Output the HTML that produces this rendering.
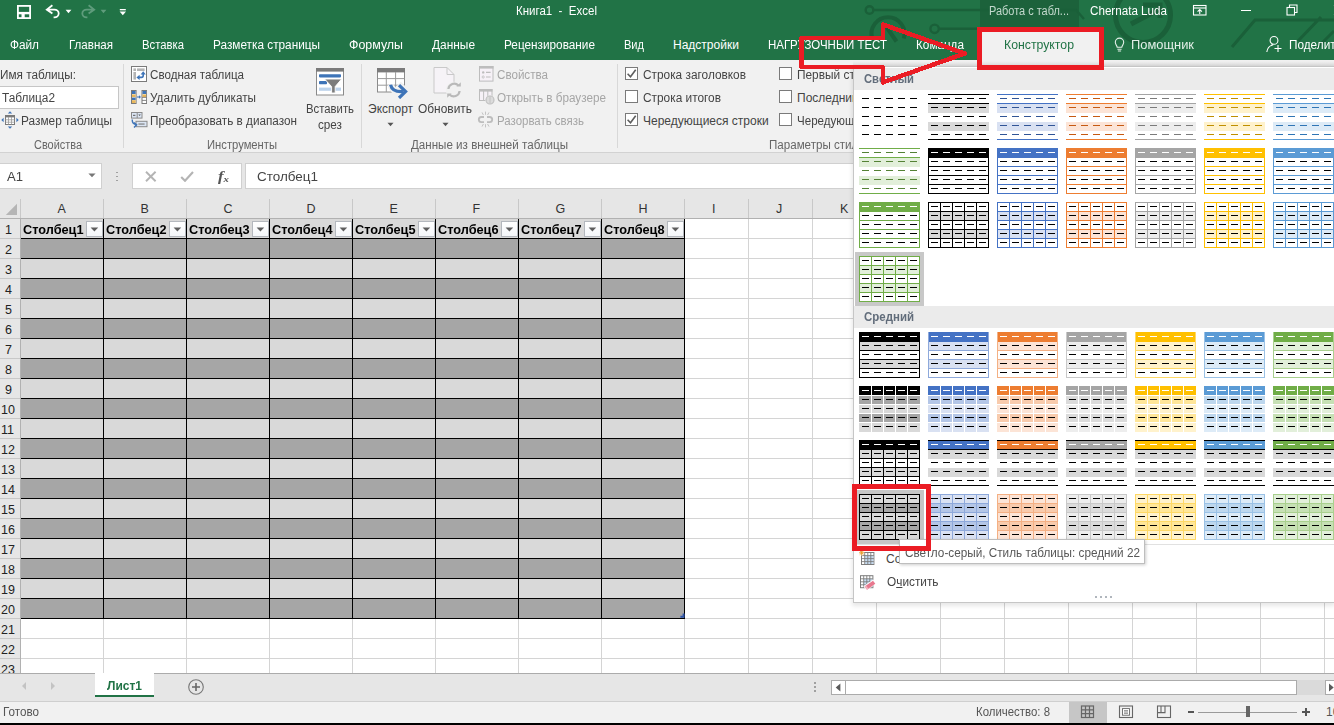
<!DOCTYPE html>
<html lang="ru"><head><meta charset="utf-8"><title>Книга1 - Excel</title>
<style>
html,body{margin:0;padding:0;}
body{width:1334px;height:725px;overflow:hidden;position:relative;background:#fff;font-family:"Liberation Sans", sans-serif;}
#root{position:absolute;left:0;top:0;width:1334px;height:725px;overflow:hidden;}
#root div,#root svg,#root span.t{position:absolute;}
span.t{white-space:nowrap;transform-origin:0 50%;}

</style></head><body><div id="root">
<div style="left:0px;top:0px;width:1334px;height:60px;background:#217346;"></div><div style="left:0px;top:60px;width:1334px;height:92px;background:#f1f1f1;"></div><div style="left:0px;top:152px;width:1334px;height:1px;background:#d2d2d2;"></div><div style="left:0px;top:153px;width:1334px;height:46px;background:#e6e6e6;"></div><div style="left:0px;top:199px;width:1334px;height:474px;background:#fff;"></div><div style="left:0px;top:673px;width:1334px;height:29px;background:#e6e6e6;"></div><div style="left:0px;top:701px;width:1334px;height:22px;background:#f1f1f1;"></div><div style="left:0px;top:723px;width:1334px;height:2px;background:#000;"></div><div style="left:980px;top:0px;width:99px;height:30px;background:#1c623b;"></div><svg style="left:840px;top:0px" width="494" height="60" viewBox="0 0 494 60" ><g fill="none" stroke="#1a6039" stroke-width="2.4"><circle cx="29.5" cy="10" r="3.8"/><path d="M33.5 10H236l8 9"/><circle cx="94.6" cy="28.8" r="4.2"/><path d="M99 28.8H140"/><path d="M32.2 38.5A16.5 16.5 0 1 1 63.8 38.5" stroke-width="4"/><path d="M46.5 27l10 14.5" stroke-width="4"/><circle cx="303" cy="15" r="27.5" stroke-width="5"/><path d="M291 24l27-14M303 5h17v13" stroke-width="5"/><path d="M392 47l23-27H494M458 41l23-24M478 47l16-16" stroke-width="3"/></g></svg><span class="t" id="t0" style="left:516px;top:3.0px;font-size:12px;line-height:16px;color:#fff;transform:scaleX(0.9589);">Книга1&nbsp; -&nbsp; Excel</span><span class="t" id="t1" style="left:989px;top:3.0px;font-size:12px;line-height:16px;color:#c3d9cd;transform:scaleX(0.9128);">Работа с табл...</span><span class="t" id="t2" style="left:1090px;top:3.0px;font-size:12px;line-height:16px;color:#fff;transform:scaleX(0.9697);">Chernata Luda</span><span class="t" id="t3" style="left:10px;top:37.0px;font-size:12px;line-height:16px;color:#fff;transform:scaleX(0.9825);">Файл</span><span class="t" id="t4" style="left:69px;top:37.0px;font-size:12px;line-height:16px;color:#fff;transform:scaleX(0.9631);">Главная</span><span class="t" id="t5" style="left:142px;top:37.0px;font-size:12px;line-height:16px;color:#fff;transform:scaleX(0.9415);">Вставка</span><span class="t" id="t6" style="left:213px;top:37.0px;font-size:12px;line-height:16px;color:#fff;transform:scaleX(0.9828);">Разметка страницы</span><span class="t" id="t7" style="left:349px;top:37.0px;font-size:12px;line-height:16px;color:#fff;transform:scaleX(1.0341);">Формулы</span><span class="t" id="t8" style="left:432px;top:37.0px;font-size:12px;line-height:16px;color:#fff;transform:scaleX(0.9917);">Данные</span><span class="t" id="t9" style="left:504px;top:37.0px;font-size:12px;line-height:16px;color:#fff;transform:scaleX(0.9820);">Рецензирование</span><span class="t" id="t10" style="left:624px;top:37.0px;font-size:12px;line-height:16px;color:#fff;transform:scaleX(0.9209);">Вид</span><span class="t" id="t11" style="left:673px;top:37.0px;font-size:12px;line-height:16px;color:#fff;">Надстройки</span><span class="t" id="t12" style="left:768px;top:37.0px;font-size:12px;line-height:16px;color:#fff;transform:scaleX(0.9547);">НАГРУЗОЧНЫЙ ТЕСТ</span><span class="t" id="t13" style="left:916px;top:37.0px;font-size:12px;line-height:16px;color:#fff;transform:scaleX(0.9818);">Команда</span><div style="left:982px;top:31px;width:118px;height:35px;background:#f1f1f1;"></div><span class="t" id="t14" style="left:1004px;top:37.0px;font-size:12px;line-height:16px;color:#217346;transform:scaleX(1.0231);">Конструктор</span><span class="t" id="t15" style="left:1131px;top:37.0px;font-size:12px;line-height:16px;color:#e3efe8;transform:scaleX(1.0735);">Помощник</span><span class="t" id="t16" style="left:1289px;top:37.0px;font-size:12px;line-height:16px;color:#fff;transform:scaleX(0.9809);">Поделиться</span><span class="t" id="t17" style="left:0px;top:67.0px;font-size:12px;line-height:16px;color:#444;transform:scaleX(0.9791);">Имя таблицы:</span><div style="left:-1px;top:86px;width:120px;height:23px;background:#fff;border:1px solid #c6c6c6;box-sizing:border-box;"></div><span class="t" id="t18" style="left:2px;top:90.4px;font-size:12px;line-height:16px;color:#444;transform:scaleX(0.9863);">Таблица2</span><span class="t" id="t19" style="left:21px;top:113.0px;font-size:12px;line-height:16px;color:#444;transform:scaleX(0.9875);">Размер таблицы</span><span class="t" id="t20" style="left:34px;top:136.5px;font-size:12px;line-height:16px;color:#666;transform:scaleX(0.9108);">Свойства</span><div style="left:123px;top:64px;width:1px;height:84px;background:#d8d8d8;"></div><span class="t" id="t21" style="left:150px;top:67.0px;font-size:12px;line-height:16px;color:#444;transform:scaleX(0.9683);">Сводная таблица</span><span class="t" id="t22" style="left:150px;top:90.0px;font-size:12px;line-height:16px;color:#444;transform:scaleX(0.9781);">Удалить дубликаты</span><span class="t" id="t23" style="left:150px;top:113.0px;font-size:12px;line-height:16px;color:#444;transform:scaleX(0.9780);">Преобразовать в диапазон</span><span class="t" id="t24" style="left:207px;top:136.5px;font-size:12px;line-height:16px;color:#666;transform:scaleX(0.9355);">Инструменты</span><span class="t" id="t25" style="left:306px;top:101.0px;font-size:12px;line-height:16px;color:#444;transform:scaleX(0.9435);">Вставить</span><span class="t" id="t26" style="left:318px;top:117.0px;font-size:12px;line-height:16px;color:#444;transform:scaleX(0.9759);">срез</span><div style="left:361px;top:64px;width:1px;height:84px;background:#d8d8d8;"></div><span class="t" id="t27" style="left:368px;top:101.0px;font-size:12px;line-height:16px;color:#444;">Экспорт</span><span class="t" id="t28" style="left:418px;top:101.0px;font-size:12px;line-height:16px;color:#444;transform:scaleX(0.9937);">Обновить</span><span class="t" id="t29" style="left:497px;top:67.0px;font-size:12px;line-height:16px;color:#a6a6a6;transform:scaleX(0.9677);">Свойства</span><span class="t" id="t30" style="left:497px;top:90.0px;font-size:12px;line-height:16px;color:#a6a6a6;transform:scaleX(0.9762);">Открыть в браузере</span><span class="t" id="t31" style="left:497px;top:113.0px;font-size:12px;line-height:16px;color:#a6a6a6;transform:scaleX(0.9551);">Разорвать связь</span><span class="t" id="t32" style="left:411px;top:136.5px;font-size:12px;line-height:16px;color:#666;transform:scaleX(0.9664);">Данные из внешней таблицы</span><div style="left:617px;top:64px;width:1px;height:84px;background:#d8d8d8;"></div><span class="t" id="t33" style="left:643px;top:67.0px;font-size:12px;line-height:16px;color:#444;transform:scaleX(0.9870);">Строка заголовков</span><span class="t" id="t34" style="left:643px;top:90.0px;font-size:12px;line-height:16px;color:#444;transform:scaleX(0.9881);">Строка итогов</span><span class="t" id="t35" style="left:643px;top:113.0px;font-size:12px;line-height:16px;color:#444;">Чередующиеся строки</span><span class="t" id="t36" style="left:797px;top:67.0px;font-size:12px;line-height:16px;color:#444;transform:scaleX(0.9883);">Первый столбец</span><span class="t" id="t37" style="left:797px;top:90.0px;font-size:12px;line-height:16px;color:#444;">Последний столбец</span><span class="t" id="t38" style="left:797px;top:113.0px;font-size:12px;line-height:16px;color:#444;transform:scaleX(0.9633);">Чередующиеся столбцы</span><span class="t" id="t39" style="left:769px;top:136.5px;font-size:12px;line-height:16px;color:#666;transform:scaleX(0.9651);">Параметры стилей таблиц</span><div style="left:625px;top:67px;width:13px;height:13px;background:#fff;border:1px solid #7a7a7a;box-sizing:border-box;"></div><div style="left:625px;top:90px;width:13px;height:13px;background:#fff;border:1px solid #7a7a7a;box-sizing:border-box;"></div><div style="left:625px;top:113px;width:13px;height:13px;background:#fff;border:1px solid #7a7a7a;box-sizing:border-box;"></div><div style="left:779px;top:67px;width:13px;height:13px;background:#fff;border:1px solid #7a7a7a;box-sizing:border-box;"></div><div style="left:779px;top:90px;width:13px;height:13px;background:#fff;border:1px solid #7a7a7a;box-sizing:border-box;"></div><div style="left:779px;top:113px;width:13px;height:13px;background:#fff;border:1px solid #7a7a7a;box-sizing:border-box;"></div><div style="left:0px;top:163px;width:102px;height:26px;background:#fff;border:1px solid #d0d0d0;border-left:none;box-sizing:border-box;"></div><span class="t" id="t40" style="left:7px;top:169.0px;font-size:12.5px;line-height:16px;color:#444;transform:scaleX(1.0460);">A1</span><div style="left:132px;top:163px;width:110px;height:26px;background:#fff;border:1px solid #d0d0d0;box-sizing:border-box;"></div><div style="left:245px;top:163px;width:1100px;height:26px;background:#fff;border:1px solid #d0d0d0;box-sizing:border-box;"></div><span class="t" id="t41" style="left:257px;top:169.2px;font-size:12.5px;line-height:16px;color:#444;transform:scaleX(1.0764);">Столбец1</span><div style="left:0px;top:199px;width:1334px;height:19px;background:#e6e6e6;"></div><div style="left:0px;top:218px;width:1334px;height:1px;background:#b1b1b1;"></div><div style="left:20px;top:199px;width:1px;height:19px;background:#c8c8c8;"></div><div style="left:103px;top:199px;width:1px;height:19px;background:#c8c8c8;"></div><div style="left:186px;top:199px;width:1px;height:19px;background:#c8c8c8;"></div><div style="left:269px;top:199px;width:1px;height:19px;background:#c8c8c8;"></div><div style="left:352px;top:199px;width:1px;height:19px;background:#c8c8c8;"></div><div style="left:435px;top:199px;width:1px;height:19px;background:#c8c8c8;"></div><div style="left:518px;top:199px;width:1px;height:19px;background:#c8c8c8;"></div><div style="left:601px;top:199px;width:1px;height:19px;background:#c8c8c8;"></div><div style="left:684px;top:199px;width:1px;height:19px;background:#c8c8c8;"></div><div style="left:748px;top:199px;width:1px;height:19px;background:#c8c8c8;"></div><div style="left:812px;top:199px;width:1px;height:19px;background:#c8c8c8;"></div><div style="left:876px;top:199px;width:1px;height:19px;background:#c8c8c8;"></div><div style="left:940px;top:199px;width:1px;height:19px;background:#c8c8c8;"></div><div style="left:1004px;top:199px;width:1px;height:19px;background:#c8c8c8;"></div><div style="left:1068px;top:199px;width:1px;height:19px;background:#c8c8c8;"></div><div style="left:1132px;top:199px;width:1px;height:19px;background:#c8c8c8;"></div><div style="left:1196px;top:199px;width:1px;height:19px;background:#c8c8c8;"></div><div style="left:1260px;top:199px;width:1px;height:19px;background:#c8c8c8;"></div><div style="left:1324px;top:199px;width:1px;height:19px;background:#c8c8c8;"></div><div style="left:1388px;top:199px;width:1px;height:19px;background:#c8c8c8;"></div><span class="t" id="t42" style="left:57.5px;top:201.0px;font-size:12.5px;line-height:16px;color:#333;">A</span><span class="t" id="t43" style="left:140.5px;top:201.0px;font-size:12.5px;line-height:16px;color:#333;">B</span><span class="t" id="t44" style="left:223.5px;top:201.0px;font-size:12.5px;line-height:16px;color:#333;">C</span><span class="t" id="t45" style="left:306.5px;top:201.0px;font-size:12.5px;line-height:16px;color:#333;">D</span><span class="t" id="t46" style="left:389.5px;top:201.0px;font-size:12.5px;line-height:16px;color:#333;">E</span><span class="t" id="t47" style="left:472.5px;top:201.0px;font-size:12.5px;line-height:16px;color:#333;">F</span><span class="t" id="t48" style="left:555.5px;top:201.0px;font-size:12.5px;line-height:16px;color:#333;">G</span><span class="t" id="t49" style="left:638.5px;top:201.0px;font-size:12.5px;line-height:16px;color:#333;">H</span><span class="t" id="t50" style="left:712.0px;top:201.0px;font-size:12.5px;line-height:16px;color:#333;">I</span><span class="t" id="t51" style="left:776.0px;top:201.0px;font-size:12.5px;line-height:16px;color:#333;">J</span><span class="t" id="t52" style="left:840.0px;top:201.0px;font-size:12.5px;line-height:16px;color:#333;">K</span><span class="t" id="t53" style="left:904.0px;top:201.0px;font-size:12.5px;line-height:16px;color:#333;">L</span><span class="t" id="t54" style="left:968.0px;top:201.0px;font-size:12.5px;line-height:16px;color:#333;">M</span><span class="t" id="t55" style="left:1032.0px;top:201.0px;font-size:12.5px;line-height:16px;color:#333;">N</span><span class="t" id="t56" style="left:1096.0px;top:201.0px;font-size:12.5px;line-height:16px;color:#333;">O</span><span class="t" id="t57" style="left:1160.0px;top:201.0px;font-size:12.5px;line-height:16px;color:#333;">P</span><span class="t" id="t58" style="left:1224.0px;top:201.0px;font-size:12.5px;line-height:16px;color:#333;">Q</span><span class="t" id="t59" style="left:1288.0px;top:201.0px;font-size:12.5px;line-height:16px;color:#333;">R</span><span class="t" id="t60" style="left:1352.0px;top:201.0px;font-size:12.5px;line-height:16px;color:#333;">S</span><div style="left:0px;top:219px;width:20px;height:454px;background:#e6e6e6;"></div><div style="left:20px;top:219px;width:1px;height:454px;background:#b1b1b1;"></div><div style="left:0px;top:238px;width:20px;height:1px;background:#c8c8c8;"></div><span class="t" id="t61" style="left:5px;top:221.6px;font-size:12.5px;line-height:16px;color:#222;">1</span><div style="left:0px;top:258px;width:20px;height:1px;background:#c8c8c8;"></div><span class="t" id="t62" style="left:5px;top:241.6px;font-size:12.5px;line-height:16px;color:#222;">2</span><div style="left:0px;top:278px;width:20px;height:1px;background:#c8c8c8;"></div><span class="t" id="t63" style="left:5px;top:261.6px;font-size:12.5px;line-height:16px;color:#222;">3</span><div style="left:0px;top:298px;width:20px;height:1px;background:#c8c8c8;"></div><span class="t" id="t64" style="left:5px;top:281.6px;font-size:12.5px;line-height:16px;color:#222;">4</span><div style="left:0px;top:318px;width:20px;height:1px;background:#c8c8c8;"></div><span class="t" id="t65" style="left:5px;top:301.6px;font-size:12.5px;line-height:16px;color:#222;">5</span><div style="left:0px;top:338px;width:20px;height:1px;background:#c8c8c8;"></div><span class="t" id="t66" style="left:5px;top:321.6px;font-size:12.5px;line-height:16px;color:#222;">6</span><div style="left:0px;top:358px;width:20px;height:1px;background:#c8c8c8;"></div><span class="t" id="t67" style="left:5px;top:341.6px;font-size:12.5px;line-height:16px;color:#222;">7</span><div style="left:0px;top:378px;width:20px;height:1px;background:#c8c8c8;"></div><span class="t" id="t68" style="left:5px;top:361.6px;font-size:12.5px;line-height:16px;color:#222;">8</span><div style="left:0px;top:398px;width:20px;height:1px;background:#c8c8c8;"></div><span class="t" id="t69" style="left:5px;top:381.6px;font-size:12.5px;line-height:16px;color:#222;">9</span><div style="left:0px;top:418px;width:20px;height:1px;background:#c8c8c8;"></div><span class="t" id="t70" style="left:1px;top:401.6px;font-size:12.5px;line-height:16px;color:#222;">10</span><div style="left:0px;top:438px;width:20px;height:1px;background:#c8c8c8;"></div><span class="t" id="t71" style="left:1px;top:421.6px;font-size:12.5px;line-height:16px;color:#222;">11</span><div style="left:0px;top:458px;width:20px;height:1px;background:#c8c8c8;"></div><span class="t" id="t72" style="left:1px;top:441.6px;font-size:12.5px;line-height:16px;color:#222;">12</span><div style="left:0px;top:478px;width:20px;height:1px;background:#c8c8c8;"></div><span class="t" id="t73" style="left:1px;top:461.6px;font-size:12.5px;line-height:16px;color:#222;">13</span><div style="left:0px;top:498px;width:20px;height:1px;background:#c8c8c8;"></div><span class="t" id="t74" style="left:1px;top:481.6px;font-size:12.5px;line-height:16px;color:#222;">14</span><div style="left:0px;top:518px;width:20px;height:1px;background:#c8c8c8;"></div><span class="t" id="t75" style="left:1px;top:501.6px;font-size:12.5px;line-height:16px;color:#222;">15</span><div style="left:0px;top:538px;width:20px;height:1px;background:#c8c8c8;"></div><span class="t" id="t76" style="left:1px;top:521.6px;font-size:12.5px;line-height:16px;color:#222;">16</span><div style="left:0px;top:558px;width:20px;height:1px;background:#c8c8c8;"></div><span class="t" id="t77" style="left:1px;top:541.6px;font-size:12.5px;line-height:16px;color:#222;">17</span><div style="left:0px;top:578px;width:20px;height:1px;background:#c8c8c8;"></div><span class="t" id="t78" style="left:1px;top:561.6px;font-size:12.5px;line-height:16px;color:#222;">18</span><div style="left:0px;top:598px;width:20px;height:1px;background:#c8c8c8;"></div><span class="t" id="t79" style="left:1px;top:581.6px;font-size:12.5px;line-height:16px;color:#222;">19</span><div style="left:0px;top:618px;width:20px;height:1px;background:#c8c8c8;"></div><span class="t" id="t80" style="left:1px;top:601.6px;font-size:12.5px;line-height:16px;color:#222;">20</span><div style="left:0px;top:638px;width:20px;height:1px;background:#c8c8c8;"></div><span class="t" id="t81" style="left:1px;top:621.6px;font-size:12.5px;line-height:16px;color:#222;">21</span><div style="left:0px;top:658px;width:20px;height:1px;background:#c8c8c8;"></div><span class="t" id="t82" style="left:1px;top:641.6px;font-size:12.5px;line-height:16px;color:#222;">22</span><span class="t" id="t83" style="left:1px;top:661.6px;font-size:12.5px;line-height:16px;color:#222;">23</span><div style="left:21px;top:238px;width:1334px;height:1px;background:#d4d4d4;"></div><div style="left:21px;top:258px;width:1334px;height:1px;background:#d4d4d4;"></div><div style="left:21px;top:278px;width:1334px;height:1px;background:#d4d4d4;"></div><div style="left:21px;top:298px;width:1334px;height:1px;background:#d4d4d4;"></div><div style="left:21px;top:318px;width:1334px;height:1px;background:#d4d4d4;"></div><div style="left:21px;top:338px;width:1334px;height:1px;background:#d4d4d4;"></div><div style="left:21px;top:358px;width:1334px;height:1px;background:#d4d4d4;"></div><div style="left:21px;top:378px;width:1334px;height:1px;background:#d4d4d4;"></div><div style="left:21px;top:398px;width:1334px;height:1px;background:#d4d4d4;"></div><div style="left:21px;top:418px;width:1334px;height:1px;background:#d4d4d4;"></div><div style="left:21px;top:438px;width:1334px;height:1px;background:#d4d4d4;"></div><div style="left:21px;top:458px;width:1334px;height:1px;background:#d4d4d4;"></div><div style="left:21px;top:478px;width:1334px;height:1px;background:#d4d4d4;"></div><div style="left:21px;top:498px;width:1334px;height:1px;background:#d4d4d4;"></div><div style="left:21px;top:518px;width:1334px;height:1px;background:#d4d4d4;"></div><div style="left:21px;top:538px;width:1334px;height:1px;background:#d4d4d4;"></div><div style="left:21px;top:558px;width:1334px;height:1px;background:#d4d4d4;"></div><div style="left:21px;top:578px;width:1334px;height:1px;background:#d4d4d4;"></div><div style="left:21px;top:598px;width:1334px;height:1px;background:#d4d4d4;"></div><div style="left:21px;top:618px;width:1334px;height:1px;background:#d4d4d4;"></div><div style="left:21px;top:638px;width:1334px;height:1px;background:#d4d4d4;"></div><div style="left:21px;top:658px;width:1334px;height:1px;background:#d4d4d4;"></div><div style="left:103px;top:219px;width:1px;height:454px;background:#d4d4d4;"></div><div style="left:186px;top:219px;width:1px;height:454px;background:#d4d4d4;"></div><div style="left:269px;top:219px;width:1px;height:454px;background:#d4d4d4;"></div><div style="left:352px;top:219px;width:1px;height:454px;background:#d4d4d4;"></div><div style="left:435px;top:219px;width:1px;height:454px;background:#d4d4d4;"></div><div style="left:518px;top:219px;width:1px;height:454px;background:#d4d4d4;"></div><div style="left:601px;top:219px;width:1px;height:454px;background:#d4d4d4;"></div><div style="left:684px;top:219px;width:1px;height:454px;background:#d4d4d4;"></div><div style="left:748px;top:219px;width:1px;height:454px;background:#d4d4d4;"></div><div style="left:812px;top:219px;width:1px;height:454px;background:#d4d4d4;"></div><div style="left:876px;top:219px;width:1px;height:454px;background:#d4d4d4;"></div><div style="left:940px;top:219px;width:1px;height:454px;background:#d4d4d4;"></div><div style="left:1004px;top:219px;width:1px;height:454px;background:#d4d4d4;"></div><div style="left:1068px;top:219px;width:1px;height:454px;background:#d4d4d4;"></div><div style="left:1132px;top:219px;width:1px;height:454px;background:#d4d4d4;"></div><div style="left:1196px;top:219px;width:1px;height:454px;background:#d4d4d4;"></div><div style="left:1260px;top:219px;width:1px;height:454px;background:#d4d4d4;"></div><div style="left:1324px;top:219px;width:1px;height:454px;background:#d4d4d4;"></div><div style="left:1388px;top:219px;width:1px;height:454px;background:#d4d4d4;"></div><div style="left:21px;top:219px;width:664px;height:20px;background:#d9d9d9;"></div><div style="left:21px;top:239px;width:664px;height:20px;background:#a6a6a6;"></div><div style="left:21px;top:259px;width:664px;height:20px;background:#d9d9d9;"></div><div style="left:21px;top:279px;width:664px;height:20px;background:#a6a6a6;"></div><div style="left:21px;top:299px;width:664px;height:20px;background:#d9d9d9;"></div><div style="left:21px;top:319px;width:664px;height:20px;background:#a6a6a6;"></div><div style="left:21px;top:339px;width:664px;height:20px;background:#d9d9d9;"></div><div style="left:21px;top:359px;width:664px;height:20px;background:#a6a6a6;"></div><div style="left:21px;top:379px;width:664px;height:20px;background:#d9d9d9;"></div><div style="left:21px;top:399px;width:664px;height:20px;background:#a6a6a6;"></div><div style="left:21px;top:419px;width:664px;height:20px;background:#d9d9d9;"></div><div style="left:21px;top:439px;width:664px;height:20px;background:#a6a6a6;"></div><div style="left:21px;top:459px;width:664px;height:20px;background:#d9d9d9;"></div><div style="left:21px;top:479px;width:664px;height:20px;background:#a6a6a6;"></div><div style="left:21px;top:499px;width:664px;height:20px;background:#d9d9d9;"></div><div style="left:21px;top:519px;width:664px;height:20px;background:#a6a6a6;"></div><div style="left:21px;top:539px;width:664px;height:20px;background:#d9d9d9;"></div><div style="left:21px;top:559px;width:664px;height:20px;background:#a6a6a6;"></div><div style="left:21px;top:579px;width:664px;height:20px;background:#d9d9d9;"></div><div style="left:21px;top:599px;width:664px;height:20px;background:#a6a6a6;"></div><div style="left:21px;top:238px;width:664px;height:1px;background:#000;"></div><div style="left:21px;top:258px;width:664px;height:1px;background:#000;"></div><div style="left:21px;top:278px;width:664px;height:1px;background:#000;"></div><div style="left:21px;top:298px;width:664px;height:1px;background:#000;"></div><div style="left:21px;top:318px;width:664px;height:1px;background:#000;"></div><div style="left:21px;top:338px;width:664px;height:1px;background:#000;"></div><div style="left:21px;top:358px;width:664px;height:1px;background:#000;"></div><div style="left:21px;top:378px;width:664px;height:1px;background:#000;"></div><div style="left:21px;top:398px;width:664px;height:1px;background:#000;"></div><div style="left:21px;top:418px;width:664px;height:1px;background:#000;"></div><div style="left:21px;top:438px;width:664px;height:1px;background:#000;"></div><div style="left:21px;top:458px;width:664px;height:1px;background:#000;"></div><div style="left:21px;top:478px;width:664px;height:1px;background:#000;"></div><div style="left:21px;top:498px;width:664px;height:1px;background:#000;"></div><div style="left:21px;top:518px;width:664px;height:1px;background:#000;"></div><div style="left:21px;top:538px;width:664px;height:1px;background:#000;"></div><div style="left:21px;top:558px;width:664px;height:1px;background:#000;"></div><div style="left:21px;top:578px;width:664px;height:1px;background:#000;"></div><div style="left:21px;top:598px;width:664px;height:1px;background:#000;"></div><div style="left:21px;top:618px;width:664px;height:1px;background:#000;"></div><div style="left:103px;top:219px;width:1px;height:400px;background:#000;"></div><div style="left:186px;top:219px;width:1px;height:400px;background:#000;"></div><div style="left:269px;top:219px;width:1px;height:400px;background:#000;"></div><div style="left:352px;top:219px;width:1px;height:400px;background:#000;"></div><div style="left:435px;top:219px;width:1px;height:400px;background:#000;"></div><div style="left:518px;top:219px;width:1px;height:400px;background:#000;"></div><div style="left:601px;top:219px;width:1px;height:400px;background:#000;"></div><div style="left:684px;top:219px;width:1px;height:400px;background:#000;"></div><span class="t" id="t84" style="left:23px;top:221.2px;font-size:13px;line-height:17px;color:#000;font-weight:bold;transform:scaleX(0.9793);">Столбец1</span><div style="left:86px;top:220.5px;width:16.5px;height:16.5px;background:linear-gradient(#fff,#f4f6f9);border:1px solid #b4b8be;box-sizing:border-box;"></div><svg style="left:90px;top:227px" width="9" height="5"><path d="M0.6 0.4h7.6l-3.8 4z" fill="#5e5e5e"/></svg><span class="t" id="t85" style="left:106px;top:221.2px;font-size:13px;line-height:17px;color:#000;font-weight:bold;transform:scaleX(0.9793);">Столбец2</span><div style="left:169px;top:220.5px;width:16.5px;height:16.5px;background:linear-gradient(#fff,#f4f6f9);border:1px solid #b4b8be;box-sizing:border-box;"></div><svg style="left:173px;top:227px" width="9" height="5"><path d="M0.6 0.4h7.6l-3.8 4z" fill="#5e5e5e"/></svg><span class="t" id="t86" style="left:189px;top:221.2px;font-size:13px;line-height:17px;color:#000;font-weight:bold;transform:scaleX(0.9793);">Столбец3</span><div style="left:252px;top:220.5px;width:16.5px;height:16.5px;background:linear-gradient(#fff,#f4f6f9);border:1px solid #b4b8be;box-sizing:border-box;"></div><svg style="left:256px;top:227px" width="9" height="5"><path d="M0.6 0.4h7.6l-3.8 4z" fill="#5e5e5e"/></svg><span class="t" id="t87" style="left:272px;top:221.2px;font-size:13px;line-height:17px;color:#000;font-weight:bold;transform:scaleX(0.9793);">Столбец4</span><div style="left:335px;top:220.5px;width:16.5px;height:16.5px;background:linear-gradient(#fff,#f4f6f9);border:1px solid #b4b8be;box-sizing:border-box;"></div><svg style="left:339px;top:227px" width="9" height="5"><path d="M0.6 0.4h7.6l-3.8 4z" fill="#5e5e5e"/></svg><span class="t" id="t88" style="left:355px;top:221.2px;font-size:13px;line-height:17px;color:#000;font-weight:bold;transform:scaleX(0.9793);">Столбец5</span><div style="left:418px;top:220.5px;width:16.5px;height:16.5px;background:linear-gradient(#fff,#f4f6f9);border:1px solid #b4b8be;box-sizing:border-box;"></div><svg style="left:422px;top:227px" width="9" height="5"><path d="M0.6 0.4h7.6l-3.8 4z" fill="#5e5e5e"/></svg><span class="t" id="t89" style="left:438px;top:221.2px;font-size:13px;line-height:17px;color:#000;font-weight:bold;transform:scaleX(0.9793);">Столбец6</span><div style="left:501px;top:220.5px;width:16.5px;height:16.5px;background:linear-gradient(#fff,#f4f6f9);border:1px solid #b4b8be;box-sizing:border-box;"></div><svg style="left:505px;top:227px" width="9" height="5"><path d="M0.6 0.4h7.6l-3.8 4z" fill="#5e5e5e"/></svg><span class="t" id="t90" style="left:521px;top:221.2px;font-size:13px;line-height:17px;color:#000;font-weight:bold;transform:scaleX(0.9793);">Столбец7</span><div style="left:584px;top:220.5px;width:16.5px;height:16.5px;background:linear-gradient(#fff,#f4f6f9);border:1px solid #b4b8be;box-sizing:border-box;"></div><svg style="left:588px;top:227px" width="9" height="5"><path d="M0.6 0.4h7.6l-3.8 4z" fill="#5e5e5e"/></svg><span class="t" id="t91" style="left:604px;top:221.2px;font-size:13px;line-height:17px;color:#000;font-weight:bold;transform:scaleX(0.9793);">Столбец8</span><div style="left:667px;top:220.5px;width:16.5px;height:16.5px;background:linear-gradient(#fff,#f4f6f9);border:1px solid #b4b8be;box-sizing:border-box;"></div><svg style="left:671px;top:227px" width="9" height="5"><path d="M0.6 0.4h7.6l-3.8 4z" fill="#5e5e5e"/></svg><svg style="left:680px;top:613px" width="5" height="5"><path d="M2.6 0.6h2v4.2h-4.2v-2h2.2z" fill="#2f55a8"/></svg><svg style="left:5px;top:203px" width="13" height="13"><path d="M12 0.8v11.2H0.8z" fill="#b5b5b5"/></svg><div style="left:0px;top:673px;width:1334px;height:1px;background:#ababab;"></div><div style="left:95px;top:673px;width:59px;height:23px;background:#fff;"></div><div style="left:95px;top:695px;width:59px;height:2px;background:#217346;"></div><span class="t" id="t92" style="left:107px;top:678.0px;font-size:12.5px;line-height:16px;color:#217346;font-weight:bold;transform:scaleX(0.9593);">Лист1</span><svg style="left:20px;top:681px" width="40" height="10"><path d="M6 1v8l-4-4z" fill="#c3c3c3"/><path d="M31 1v8l4-4z" fill="#c3c3c3"/></svg><svg style="left:187px;top:678px" width="18" height="18"><circle cx="9" cy="9" r="7.3" fill="none" stroke="#777" stroke-width="1.1"/><path d="M5 9h8M9 5v8" stroke="#666" stroke-width="1.6"/></svg><div style="left:831px;top:680px;width:15px;height:15px;background:#fff;border:1px solid #ababab;box-sizing:border-box;"></div><div style="left:846px;top:680px;width:451px;height:15px;background:#fff;border:1px solid #ababab;border-left:none;box-sizing:border-box;"></div><div style="left:1297px;top:680px;width:28px;height:15px;background:#dadada;"></div><div style="left:1325px;top:680px;width:14px;height:15px;background:#fff;border:1px solid #ababab;box-sizing:border-box;"></div><svg style="left:834px;top:683px" width="8" height="9"><path d="M6.4 0.5v8l-4.7-4z" fill="#5a5a5a"/></svg><svg style="left:1328px;top:683px" width="8" height="9"><path d="M1 0.5v8l4.7-4z" fill="#5a5a5a"/></svg><div style="left:814px;top:682px;width:2px;height:2px;background:#a0a0a0;"></div><div style="left:814px;top:686px;width:2px;height:2px;background:#a0a0a0;"></div><div style="left:814px;top:690px;width:2px;height:2px;background:#a0a0a0;"></div><div style="left:0px;top:701px;width:1334px;height:1px;background:#cfcfcf;"></div><span class="t" id="t93" style="left:3px;top:704.0px;font-size:12px;line-height:16px;color:#555;transform:scaleX(0.9713);">Готово</span><span class="t" id="t94" style="left:976px;top:704.0px;font-size:12px;line-height:16px;color:#555;transform:scaleX(0.9512);">Количество: 8</span><div style="left:1069px;top:702px;width:38px;height:21px;background:#c6c6c6;"></div><span class="t" id="t95" style="left:1326px;top:704.0px;font-size:12px;line-height:16px;color:#555;">100%</span><div style="left:852px;top:66px;width:483px;height:540px;background:linear-gradient(#00000018,#00000018);filter:blur(2px);"></div><div style="left:853px;top:61px;width:481px;height:5px;background:linear-gradient(#0000,#00000014);"></div><div style="left:853px;top:66px;width:483px;height:537px;background:#fff;border:1px solid #c6c6c6;box-sizing:border-box;"></div><div style="left:854px;top:68px;width:1334px;height:22px;background:#ebebeb;"></div><div style="left:854px;top:306px;width:1334px;height:22px;background:#ebebeb;"></div><span class="t" id="t96" style="left:864px;top:71.0px;font-size:12px;line-height:16px;color:#626d7b;font-weight:bold;transform:scaleX(0.9368);">Светлый</span><span class="t" id="t97" style="left:864px;top:309.0px;font-size:12px;line-height:16px;color:#626d7b;font-weight:bold;transform:scaleX(0.9561);">Средний</span><svg style="left:853px;top:66px" width="481" height="537" shape-rendering="crispEdges"><rect x="2" y="186" width="69" height="54" fill="#c8c8c8"/><rect x="2" y="424" width="69" height="54" fill="#c6c6c6"/><path d="M9 32.5h58M9 41.5h58M9 50.5h58M9 59.5h58M9 68.5h58" stroke="#000" stroke-width="1" stroke-dasharray="7 5" fill="none"/><rect x="75" y="38" width="61" height="9" fill="#d9d9d9"/><rect x="75" y="56" width="61" height="9" fill="#d9d9d9"/><rect x="75" y="28" width="61" height="1" fill="#000000"/><rect x="75" y="37" width="61" height="1" fill="#000000"/><rect x="75" y="73" width="61" height="1" fill="#000000"/><path d="M78 32.5h58M78 41.5h58M78 50.5h58M78 59.5h58M78 68.5h58" stroke="#000000" stroke-width="1" stroke-dasharray="7 5" fill="none"/><rect x="144" y="38" width="61" height="9" fill="#d9e1f2"/><rect x="144" y="56" width="61" height="9" fill="#d9e1f2"/><rect x="144" y="28" width="61" height="1" fill="#4472c4"/><rect x="144" y="37" width="61" height="1" fill="#4472c4"/><rect x="144" y="73" width="61" height="1" fill="#4472c4"/><path d="M147 32.5h58M147 41.5h58M147 50.5h58M147 59.5h58M147 68.5h58" stroke="#305496" stroke-width="1" stroke-dasharray="7 5" fill="none"/><rect x="213" y="38" width="61" height="9" fill="#fce4d6"/><rect x="213" y="56" width="61" height="9" fill="#fce4d6"/><rect x="213" y="28" width="61" height="1" fill="#ed7d31"/><rect x="213" y="37" width="61" height="1" fill="#ed7d31"/><rect x="213" y="73" width="61" height="1" fill="#ed7d31"/><path d="M216 32.5h58M216 41.5h58M216 50.5h58M216 59.5h58M216 68.5h58" stroke="#c65911" stroke-width="1" stroke-dasharray="7 5" fill="none"/><rect x="282" y="38" width="61" height="9" fill="#ededed"/><rect x="282" y="56" width="61" height="9" fill="#ededed"/><rect x="282" y="28" width="61" height="1" fill="#a5a5a5"/><rect x="282" y="37" width="61" height="1" fill="#a5a5a5"/><rect x="282" y="73" width="61" height="1" fill="#a5a5a5"/><path d="M285 32.5h58M285 41.5h58M285 50.5h58M285 59.5h58M285 68.5h58" stroke="#7b7b7b" stroke-width="1" stroke-dasharray="7 5" fill="none"/><rect x="351" y="38" width="61" height="9" fill="#fff2cc"/><rect x="351" y="56" width="61" height="9" fill="#fff2cc"/><rect x="351" y="28" width="61" height="1" fill="#ffc000"/><rect x="351" y="37" width="61" height="1" fill="#ffc000"/><rect x="351" y="73" width="61" height="1" fill="#ffc000"/><path d="M354 32.5h58M354 41.5h58M354 50.5h58M354 59.5h58M354 68.5h58" stroke="#bf8f00" stroke-width="1" stroke-dasharray="7 5" fill="none"/><rect x="420" y="38" width="61" height="9" fill="#ddebf7"/><rect x="420" y="56" width="61" height="9" fill="#ddebf7"/><rect x="420" y="28" width="61" height="1" fill="#5b9bd5"/><rect x="420" y="37" width="61" height="1" fill="#5b9bd5"/><rect x="420" y="73" width="61" height="1" fill="#5b9bd5"/><path d="M423 32.5h58M423 41.5h58M423 50.5h58M423 59.5h58M423 68.5h58" stroke="#2f75b5" stroke-width="1" stroke-dasharray="7 5" fill="none"/><rect x="6" y="92" width="61" height="9" fill="#e2efda"/><rect x="6" y="110" width="61" height="9" fill="#e2efda"/><rect x="6" y="82" width="61" height="1" fill="#70ad47"/><rect x="6" y="91" width="61" height="1" fill="#70ad47"/><rect x="6" y="127" width="61" height="1" fill="#70ad47"/><path d="M9 86.5h58M9 95.5h58M9 104.5h58M9 113.5h58M9 122.5h58" stroke="#548235" stroke-width="1" stroke-dasharray="7 5" fill="none"/><rect x="75" y="82" width="61" height="10" fill="#000000"/><rect x="75" y="100" width="61" height="1" fill="#000000"/><rect x="75" y="109" width="61" height="1" fill="#000000"/><rect x="75" y="118" width="61" height="1" fill="#000000"/><rect x="75" y="127" width="61" height="1" fill="#000000"/><rect x="75" y="82" width="1" height="46" fill="#000000"/><rect x="135" y="82" width="1" height="46" fill="#000000"/><path d="M78 86.5h58" stroke="#fff" stroke-width="1" stroke-dasharray="7 5" fill="none"/><path d="M78 95.5h58M78 104.5h58M78 113.5h58M78 122.5h58" stroke="#000" stroke-width="1" stroke-dasharray="7 5" fill="none"/><rect x="144" y="82" width="61" height="10" fill="#4472c4"/><rect x="144" y="100" width="61" height="1" fill="#4472c4"/><rect x="144" y="109" width="61" height="1" fill="#4472c4"/><rect x="144" y="118" width="61" height="1" fill="#4472c4"/><rect x="144" y="127" width="61" height="1" fill="#4472c4"/><rect x="144" y="82" width="1" height="46" fill="#4472c4"/><rect x="204" y="82" width="1" height="46" fill="#4472c4"/><path d="M147 86.5h58" stroke="#fff" stroke-width="1" stroke-dasharray="7 5" fill="none"/><path d="M147 95.5h58M147 104.5h58M147 113.5h58M147 122.5h58" stroke="#000" stroke-width="1" stroke-dasharray="7 5" fill="none"/><rect x="213" y="82" width="61" height="10" fill="#ed7d31"/><rect x="213" y="100" width="61" height="1" fill="#ed7d31"/><rect x="213" y="109" width="61" height="1" fill="#ed7d31"/><rect x="213" y="118" width="61" height="1" fill="#ed7d31"/><rect x="213" y="127" width="61" height="1" fill="#ed7d31"/><rect x="213" y="82" width="1" height="46" fill="#ed7d31"/><rect x="273" y="82" width="1" height="46" fill="#ed7d31"/><path d="M216 86.5h58" stroke="#fff" stroke-width="1" stroke-dasharray="7 5" fill="none"/><path d="M216 95.5h58M216 104.5h58M216 113.5h58M216 122.5h58" stroke="#000" stroke-width="1" stroke-dasharray="7 5" fill="none"/><rect x="282" y="82" width="61" height="10" fill="#a5a5a5"/><rect x="282" y="100" width="61" height="1" fill="#a5a5a5"/><rect x="282" y="109" width="61" height="1" fill="#a5a5a5"/><rect x="282" y="118" width="61" height="1" fill="#a5a5a5"/><rect x="282" y="127" width="61" height="1" fill="#a5a5a5"/><rect x="282" y="82" width="1" height="46" fill="#a5a5a5"/><rect x="342" y="82" width="1" height="46" fill="#a5a5a5"/><path d="M285 86.5h58" stroke="#fff" stroke-width="1" stroke-dasharray="7 5" fill="none"/><path d="M285 95.5h58M285 104.5h58M285 113.5h58M285 122.5h58" stroke="#000" stroke-width="1" stroke-dasharray="7 5" fill="none"/><rect x="351" y="82" width="61" height="10" fill="#ffc000"/><rect x="351" y="100" width="61" height="1" fill="#ffc000"/><rect x="351" y="109" width="61" height="1" fill="#ffc000"/><rect x="351" y="118" width="61" height="1" fill="#ffc000"/><rect x="351" y="127" width="61" height="1" fill="#ffc000"/><rect x="351" y="82" width="1" height="46" fill="#ffc000"/><rect x="411" y="82" width="1" height="46" fill="#ffc000"/><path d="M354 86.5h58" stroke="#fff" stroke-width="1" stroke-dasharray="7 5" fill="none"/><path d="M354 95.5h58M354 104.5h58M354 113.5h58M354 122.5h58" stroke="#000" stroke-width="1" stroke-dasharray="7 5" fill="none"/><rect x="420" y="82" width="61" height="10" fill="#5b9bd5"/><rect x="420" y="100" width="61" height="1" fill="#5b9bd5"/><rect x="420" y="109" width="61" height="1" fill="#5b9bd5"/><rect x="420" y="118" width="61" height="1" fill="#5b9bd5"/><rect x="420" y="127" width="61" height="1" fill="#5b9bd5"/><rect x="420" y="82" width="1" height="46" fill="#5b9bd5"/><rect x="480" y="82" width="1" height="46" fill="#5b9bd5"/><path d="M423 86.5h58" stroke="#fff" stroke-width="1" stroke-dasharray="7 5" fill="none"/><path d="M423 95.5h58M423 104.5h58M423 113.5h58M423 122.5h58" stroke="#000" stroke-width="1" stroke-dasharray="7 5" fill="none"/><rect x="6" y="136" width="61" height="10" fill="#70ad47"/><rect x="6" y="154" width="61" height="1" fill="#70ad47"/><rect x="6" y="163" width="61" height="1" fill="#70ad47"/><rect x="6" y="172" width="61" height="1" fill="#70ad47"/><rect x="6" y="181" width="61" height="1" fill="#70ad47"/><rect x="6" y="136" width="1" height="46" fill="#70ad47"/><rect x="66" y="136" width="1" height="46" fill="#70ad47"/><path d="M9 140.5h58" stroke="#fff" stroke-width="1" stroke-dasharray="7 5" fill="none"/><path d="M9 149.5h58M9 158.5h58M9 167.5h58M9 176.5h58" stroke="#000" stroke-width="1" stroke-dasharray="7 5" fill="none"/><rect x="75" y="136" width="61" height="46" fill="#fff"/><rect x="75" y="145" width="61" height="9" fill="#d9d9d9"/><rect x="75" y="163" width="61" height="9" fill="#d9d9d9"/><rect x="75" y="136" width="61" height="1" fill="#000000"/><rect x="75" y="145" width="61" height="1" fill="#000000"/><rect x="75" y="154" width="61" height="1" fill="#000000"/><rect x="75" y="163" width="61" height="1" fill="#000000"/><rect x="75" y="172" width="61" height="1" fill="#000000"/><rect x="75" y="181" width="61" height="1" fill="#000000"/><rect x="75" y="136" width="1" height="46" fill="#000000"/><rect x="87" y="136" width="1" height="46" fill="#000000"/><rect x="99" y="136" width="1" height="46" fill="#000000"/><rect x="111" y="136" width="1" height="46" fill="#000000"/><rect x="123" y="136" width="1" height="46" fill="#000000"/><rect x="135" y="136" width="1" height="46" fill="#000000"/><path d="M78 140.5h58M78 149.5h58M78 158.5h58M78 167.5h58M78 176.5h58" stroke="#000" stroke-width="1" stroke-dasharray="7 5" fill="none"/><rect x="144" y="136" width="61" height="46" fill="#fff"/><rect x="144" y="145" width="61" height="9" fill="#d9e1f2"/><rect x="144" y="163" width="61" height="9" fill="#d9e1f2"/><rect x="144" y="136" width="61" height="1" fill="#4472c4"/><rect x="144" y="145" width="61" height="1" fill="#4472c4"/><rect x="144" y="154" width="61" height="1" fill="#4472c4"/><rect x="144" y="163" width="61" height="1" fill="#4472c4"/><rect x="144" y="172" width="61" height="1" fill="#4472c4"/><rect x="144" y="181" width="61" height="1" fill="#4472c4"/><rect x="144" y="136" width="1" height="46" fill="#4472c4"/><rect x="156" y="136" width="1" height="46" fill="#4472c4"/><rect x="168" y="136" width="1" height="46" fill="#4472c4"/><rect x="180" y="136" width="1" height="46" fill="#4472c4"/><rect x="192" y="136" width="1" height="46" fill="#4472c4"/><rect x="204" y="136" width="1" height="46" fill="#4472c4"/><path d="M147 140.5h58M147 149.5h58M147 158.5h58M147 167.5h58M147 176.5h58" stroke="#000" stroke-width="1" stroke-dasharray="7 5" fill="none"/><rect x="213" y="136" width="61" height="46" fill="#fff"/><rect x="213" y="145" width="61" height="9" fill="#fce4d6"/><rect x="213" y="163" width="61" height="9" fill="#fce4d6"/><rect x="213" y="136" width="61" height="1" fill="#ed7d31"/><rect x="213" y="145" width="61" height="1" fill="#ed7d31"/><rect x="213" y="154" width="61" height="1" fill="#ed7d31"/><rect x="213" y="163" width="61" height="1" fill="#ed7d31"/><rect x="213" y="172" width="61" height="1" fill="#ed7d31"/><rect x="213" y="181" width="61" height="1" fill="#ed7d31"/><rect x="213" y="136" width="1" height="46" fill="#ed7d31"/><rect x="225" y="136" width="1" height="46" fill="#ed7d31"/><rect x="237" y="136" width="1" height="46" fill="#ed7d31"/><rect x="249" y="136" width="1" height="46" fill="#ed7d31"/><rect x="261" y="136" width="1" height="46" fill="#ed7d31"/><rect x="273" y="136" width="1" height="46" fill="#ed7d31"/><path d="M216 140.5h58M216 149.5h58M216 158.5h58M216 167.5h58M216 176.5h58" stroke="#000" stroke-width="1" stroke-dasharray="7 5" fill="none"/><rect x="282" y="136" width="61" height="46" fill="#fff"/><rect x="282" y="145" width="61" height="9" fill="#ededed"/><rect x="282" y="163" width="61" height="9" fill="#ededed"/><rect x="282" y="136" width="61" height="1" fill="#a5a5a5"/><rect x="282" y="145" width="61" height="1" fill="#a5a5a5"/><rect x="282" y="154" width="61" height="1" fill="#a5a5a5"/><rect x="282" y="163" width="61" height="1" fill="#a5a5a5"/><rect x="282" y="172" width="61" height="1" fill="#a5a5a5"/><rect x="282" y="181" width="61" height="1" fill="#a5a5a5"/><rect x="282" y="136" width="1" height="46" fill="#a5a5a5"/><rect x="294" y="136" width="1" height="46" fill="#a5a5a5"/><rect x="306" y="136" width="1" height="46" fill="#a5a5a5"/><rect x="318" y="136" width="1" height="46" fill="#a5a5a5"/><rect x="330" y="136" width="1" height="46" fill="#a5a5a5"/><rect x="342" y="136" width="1" height="46" fill="#a5a5a5"/><path d="M285 140.5h58M285 149.5h58M285 158.5h58M285 167.5h58M285 176.5h58" stroke="#000" stroke-width="1" stroke-dasharray="7 5" fill="none"/><rect x="351" y="136" width="61" height="46" fill="#fff"/><rect x="351" y="145" width="61" height="9" fill="#fff2cc"/><rect x="351" y="163" width="61" height="9" fill="#fff2cc"/><rect x="351" y="136" width="61" height="1" fill="#ffc000"/><rect x="351" y="145" width="61" height="1" fill="#ffc000"/><rect x="351" y="154" width="61" height="1" fill="#ffc000"/><rect x="351" y="163" width="61" height="1" fill="#ffc000"/><rect x="351" y="172" width="61" height="1" fill="#ffc000"/><rect x="351" y="181" width="61" height="1" fill="#ffc000"/><rect x="351" y="136" width="1" height="46" fill="#ffc000"/><rect x="363" y="136" width="1" height="46" fill="#ffc000"/><rect x="375" y="136" width="1" height="46" fill="#ffc000"/><rect x="387" y="136" width="1" height="46" fill="#ffc000"/><rect x="399" y="136" width="1" height="46" fill="#ffc000"/><rect x="411" y="136" width="1" height="46" fill="#ffc000"/><path d="M354 140.5h58M354 149.5h58M354 158.5h58M354 167.5h58M354 176.5h58" stroke="#000" stroke-width="1" stroke-dasharray="7 5" fill="none"/><rect x="420" y="136" width="61" height="46" fill="#fff"/><rect x="420" y="145" width="61" height="9" fill="#ddebf7"/><rect x="420" y="163" width="61" height="9" fill="#ddebf7"/><rect x="420" y="136" width="61" height="1" fill="#5b9bd5"/><rect x="420" y="145" width="61" height="1" fill="#5b9bd5"/><rect x="420" y="154" width="61" height="1" fill="#5b9bd5"/><rect x="420" y="163" width="61" height="1" fill="#5b9bd5"/><rect x="420" y="172" width="61" height="1" fill="#5b9bd5"/><rect x="420" y="181" width="61" height="1" fill="#5b9bd5"/><rect x="420" y="136" width="1" height="46" fill="#5b9bd5"/><rect x="432" y="136" width="1" height="46" fill="#5b9bd5"/><rect x="444" y="136" width="1" height="46" fill="#5b9bd5"/><rect x="456" y="136" width="1" height="46" fill="#5b9bd5"/><rect x="468" y="136" width="1" height="46" fill="#5b9bd5"/><rect x="480" y="136" width="1" height="46" fill="#5b9bd5"/><path d="M423 140.5h58M423 149.5h58M423 158.5h58M423 167.5h58M423 176.5h58" stroke="#000" stroke-width="1" stroke-dasharray="7 5" fill="none"/><rect x="6" y="190" width="61" height="46" fill="#fff"/><rect x="6" y="199" width="61" height="9" fill="#e2efda"/><rect x="6" y="217" width="61" height="9" fill="#e2efda"/><rect x="6" y="190" width="61" height="1" fill="#70ad47"/><rect x="6" y="199" width="61" height="1" fill="#70ad47"/><rect x="6" y="208" width="61" height="1" fill="#70ad47"/><rect x="6" y="217" width="61" height="1" fill="#70ad47"/><rect x="6" y="226" width="61" height="1" fill="#70ad47"/><rect x="6" y="235" width="61" height="1" fill="#70ad47"/><rect x="6" y="190" width="1" height="46" fill="#70ad47"/><rect x="18" y="190" width="1" height="46" fill="#70ad47"/><rect x="30" y="190" width="1" height="46" fill="#70ad47"/><rect x="42" y="190" width="1" height="46" fill="#70ad47"/><rect x="54" y="190" width="1" height="46" fill="#70ad47"/><rect x="66" y="190" width="1" height="46" fill="#70ad47"/><path d="M9 194.5h58M9 203.5h58M9 212.5h58M9 221.5h58M9 230.5h58" stroke="#000" stroke-width="1" stroke-dasharray="7 5" fill="none"/><rect x="6" y="275" width="61" height="9" fill="#d9d9d9"/><rect x="6" y="293" width="61" height="9" fill="#d9d9d9"/><rect x="6" y="266" width="61" height="10" fill="#000000"/><rect x="6" y="284" width="61" height="1" fill="#000000"/><rect x="6" y="293" width="61" height="1" fill="#000000"/><rect x="6" y="302" width="61" height="1" fill="#000000"/><rect x="6" y="311" width="61" height="1" fill="#000000"/><rect x="6" y="266" width="1" height="46" fill="#000000"/><rect x="66" y="266" width="1" height="46" fill="#000000"/><path d="M9 270.5h58" stroke="#fff" stroke-width="1" stroke-dasharray="7 5" fill="none"/><path d="M9 279.5h58M9 288.5h58M9 297.5h58M9 306.5h58" stroke="#000" stroke-width="1" stroke-dasharray="7 5" fill="none"/><rect x="6" y="320" width="61" height="9" fill="#000000"/><rect x="6" y="329" width="61" height="9" fill="#a6a6a6"/><rect x="6" y="347" width="61" height="9" fill="#a6a6a6"/><rect x="6" y="338" width="61" height="9" fill="#d9d9d9"/><rect x="6" y="356" width="61" height="9" fill="#d9d9d9"/><rect x="6" y="365" width="61" height="1" fill="#d9d9d9"/><rect x="6" y="329" width="61" height="1" fill="#fff"/><rect x="6" y="338" width="61" height="1" fill="#fff"/><rect x="6" y="347" width="61" height="1" fill="#fff"/><rect x="6" y="356" width="61" height="1" fill="#fff"/><rect x="18" y="320" width="1" height="46" fill="#fff"/><rect x="30" y="320" width="1" height="46" fill="#fff"/><rect x="42" y="320" width="1" height="46" fill="#fff"/><rect x="54" y="320" width="1" height="46" fill="#fff"/><path d="M9 324.5h58" stroke="#fff" stroke-width="1" stroke-dasharray="7 5" fill="none"/><path d="M9 333.5h58M9 342.5h58M9 351.5h58M9 360.5h58" stroke="#000" stroke-width="1" stroke-dasharray="7 5" fill="none"/><rect x="6" y="374" width="61" height="10" fill="#000000"/><rect x="6" y="384" width="61" height="9" fill="#d9d9d9"/><rect x="6" y="402" width="61" height="9" fill="#d9d9d9"/><rect x="6" y="374" width="61" height="1" fill="#000"/><rect x="6" y="383" width="61" height="1" fill="#000"/><rect x="6" y="419" width="61" height="1" fill="#000"/><rect x="6" y="392" width="61" height="1" fill="#000"/><rect x="6" y="401" width="61" height="1" fill="#000"/><rect x="6" y="410" width="61" height="1" fill="#000"/><rect x="6" y="384" width="1" height="36" fill="#000"/><rect x="18" y="384" width="1" height="36" fill="#000"/><rect x="30" y="384" width="1" height="36" fill="#000"/><rect x="42" y="384" width="1" height="36" fill="#000"/><rect x="54" y="384" width="1" height="36" fill="#000"/><rect x="66" y="384" width="1" height="36" fill="#000"/><path d="M9 378.5h58" stroke="#fff" stroke-width="1" stroke-dasharray="7 5" fill="none"/><path d="M9 387.5h58M9 396.5h58M9 405.5h58M9 414.5h58" stroke="#000" stroke-width="1" stroke-dasharray="7 5" fill="none"/><rect x="6" y="428" width="61" height="9" fill="#d9d9d9"/><rect x="6" y="446" width="61" height="9" fill="#d9d9d9"/><rect x="6" y="464" width="61" height="9" fill="#d9d9d9"/><rect x="6" y="437" width="61" height="9" fill="#a6a6a6"/><rect x="6" y="455" width="61" height="9" fill="#a6a6a6"/><rect x="6" y="428" width="61" height="1" fill="#000"/><rect x="6" y="437" width="61" height="1" fill="#000"/><rect x="6" y="446" width="61" height="1" fill="#000"/><rect x="6" y="455" width="61" height="1" fill="#000"/><rect x="6" y="464" width="61" height="1" fill="#000"/><rect x="6" y="473" width="61" height="1" fill="#000"/><rect x="6" y="428" width="1" height="46" fill="#000"/><rect x="18" y="428" width="1" height="46" fill="#000"/><rect x="30" y="428" width="1" height="46" fill="#000"/><rect x="42" y="428" width="1" height="46" fill="#000"/><rect x="54" y="428" width="1" height="46" fill="#000"/><rect x="66" y="428" width="1" height="46" fill="#000"/><path d="M9 432.5h58M9 441.5h58M9 450.5h58M9 459.5h58M9 468.5h58" stroke="#000" stroke-width="1" stroke-dasharray="7 5" fill="none"/><rect x="75" y="275" width="61" height="9" fill="#d9e1f2"/><rect x="75" y="293" width="61" height="9" fill="#d9e1f2"/><rect x="75" y="266" width="61" height="10" fill="#4472c4"/><rect x="75" y="284" width="61" height="1" fill="#8ea9db"/><rect x="75" y="293" width="61" height="1" fill="#8ea9db"/><rect x="75" y="302" width="61" height="1" fill="#8ea9db"/><rect x="75" y="311" width="61" height="1" fill="#8ea9db"/><rect x="75" y="266" width="1" height="46" fill="#8ea9db"/><rect x="135" y="266" width="1" height="46" fill="#8ea9db"/><path d="M78 270.5h58" stroke="#fff" stroke-width="1" stroke-dasharray="7 5" fill="none"/><path d="M78 279.5h58M78 288.5h58M78 297.5h58M78 306.5h58" stroke="#000" stroke-width="1" stroke-dasharray="7 5" fill="none"/><rect x="75" y="320" width="61" height="9" fill="#4472c4"/><rect x="75" y="329" width="61" height="9" fill="#b4c6e7"/><rect x="75" y="347" width="61" height="9" fill="#b4c6e7"/><rect x="75" y="338" width="61" height="9" fill="#d9e1f2"/><rect x="75" y="356" width="61" height="9" fill="#d9e1f2"/><rect x="75" y="365" width="61" height="1" fill="#d9e1f2"/><rect x="75" y="329" width="61" height="1" fill="#fff"/><rect x="75" y="338" width="61" height="1" fill="#fff"/><rect x="75" y="347" width="61" height="1" fill="#fff"/><rect x="75" y="356" width="61" height="1" fill="#fff"/><rect x="87" y="320" width="1" height="46" fill="#fff"/><rect x="99" y="320" width="1" height="46" fill="#fff"/><rect x="111" y="320" width="1" height="46" fill="#fff"/><rect x="123" y="320" width="1" height="46" fill="#fff"/><path d="M78 324.5h58" stroke="#fff" stroke-width="1" stroke-dasharray="7 5" fill="none"/><path d="M78 333.5h58M78 342.5h58M78 351.5h58M78 360.5h58" stroke="#000" stroke-width="1" stroke-dasharray="7 5" fill="none"/><rect x="75" y="374" width="61" height="10" fill="#4472c4"/><rect x="75" y="384" width="61" height="9" fill="#d9d9d9"/><rect x="75" y="402" width="61" height="9" fill="#d9d9d9"/><rect x="75" y="374" width="61" height="1" fill="#000"/><rect x="75" y="383" width="61" height="1" fill="#000"/><rect x="75" y="419" width="61" height="1" fill="#000"/><path d="M78 378.5h58" stroke="#fff" stroke-width="1" stroke-dasharray="7 5" fill="none"/><path d="M78 387.5h58M78 396.5h58M78 405.5h58M78 414.5h58" stroke="#000" stroke-width="1" stroke-dasharray="7 5" fill="none"/><rect x="75" y="428" width="61" height="9" fill="#d9e1f2"/><rect x="75" y="446" width="61" height="9" fill="#d9e1f2"/><rect x="75" y="464" width="61" height="9" fill="#d9e1f2"/><rect x="75" y="437" width="61" height="9" fill="#b4c6e7"/><rect x="75" y="455" width="61" height="9" fill="#b4c6e7"/><rect x="75" y="428" width="61" height="1" fill="#8ea9db"/><rect x="75" y="437" width="61" height="1" fill="#8ea9db"/><rect x="75" y="446" width="61" height="1" fill="#8ea9db"/><rect x="75" y="455" width="61" height="1" fill="#8ea9db"/><rect x="75" y="464" width="61" height="1" fill="#8ea9db"/><rect x="75" y="473" width="61" height="1" fill="#8ea9db"/><rect x="75" y="428" width="1" height="46" fill="#8ea9db"/><rect x="87" y="428" width="1" height="46" fill="#8ea9db"/><rect x="99" y="428" width="1" height="46" fill="#8ea9db"/><rect x="111" y="428" width="1" height="46" fill="#8ea9db"/><rect x="123" y="428" width="1" height="46" fill="#8ea9db"/><rect x="135" y="428" width="1" height="46" fill="#8ea9db"/><path d="M78 432.5h58M78 441.5h58M78 450.5h58M78 459.5h58M78 468.5h58" stroke="#000" stroke-width="1" stroke-dasharray="7 5" fill="none"/><rect x="144" y="275" width="61" height="9" fill="#fce4d6"/><rect x="144" y="293" width="61" height="9" fill="#fce4d6"/><rect x="144" y="266" width="61" height="10" fill="#ed7d31"/><rect x="144" y="284" width="61" height="1" fill="#f4b084"/><rect x="144" y="293" width="61" height="1" fill="#f4b084"/><rect x="144" y="302" width="61" height="1" fill="#f4b084"/><rect x="144" y="311" width="61" height="1" fill="#f4b084"/><rect x="144" y="266" width="1" height="46" fill="#f4b084"/><rect x="204" y="266" width="1" height="46" fill="#f4b084"/><path d="M147 270.5h58" stroke="#fff" stroke-width="1" stroke-dasharray="7 5" fill="none"/><path d="M147 279.5h58M147 288.5h58M147 297.5h58M147 306.5h58" stroke="#000" stroke-width="1" stroke-dasharray="7 5" fill="none"/><rect x="144" y="320" width="61" height="9" fill="#ed7d31"/><rect x="144" y="329" width="61" height="9" fill="#f8cbad"/><rect x="144" y="347" width="61" height="9" fill="#f8cbad"/><rect x="144" y="338" width="61" height="9" fill="#fce4d6"/><rect x="144" y="356" width="61" height="9" fill="#fce4d6"/><rect x="144" y="365" width="61" height="1" fill="#fce4d6"/><rect x="144" y="329" width="61" height="1" fill="#fff"/><rect x="144" y="338" width="61" height="1" fill="#fff"/><rect x="144" y="347" width="61" height="1" fill="#fff"/><rect x="144" y="356" width="61" height="1" fill="#fff"/><rect x="156" y="320" width="1" height="46" fill="#fff"/><rect x="168" y="320" width="1" height="46" fill="#fff"/><rect x="180" y="320" width="1" height="46" fill="#fff"/><rect x="192" y="320" width="1" height="46" fill="#fff"/><path d="M147 324.5h58" stroke="#fff" stroke-width="1" stroke-dasharray="7 5" fill="none"/><path d="M147 333.5h58M147 342.5h58M147 351.5h58M147 360.5h58" stroke="#000" stroke-width="1" stroke-dasharray="7 5" fill="none"/><rect x="144" y="374" width="61" height="10" fill="#ed7d31"/><rect x="144" y="384" width="61" height="9" fill="#d9d9d9"/><rect x="144" y="402" width="61" height="9" fill="#d9d9d9"/><rect x="144" y="374" width="61" height="1" fill="#000"/><rect x="144" y="383" width="61" height="1" fill="#000"/><rect x="144" y="419" width="61" height="1" fill="#000"/><path d="M147 378.5h58" stroke="#fff" stroke-width="1" stroke-dasharray="7 5" fill="none"/><path d="M147 387.5h58M147 396.5h58M147 405.5h58M147 414.5h58" stroke="#000" stroke-width="1" stroke-dasharray="7 5" fill="none"/><rect x="144" y="428" width="61" height="9" fill="#fce4d6"/><rect x="144" y="446" width="61" height="9" fill="#fce4d6"/><rect x="144" y="464" width="61" height="9" fill="#fce4d6"/><rect x="144" y="437" width="61" height="9" fill="#f8cbad"/><rect x="144" y="455" width="61" height="9" fill="#f8cbad"/><rect x="144" y="428" width="61" height="1" fill="#f4b084"/><rect x="144" y="437" width="61" height="1" fill="#f4b084"/><rect x="144" y="446" width="61" height="1" fill="#f4b084"/><rect x="144" y="455" width="61" height="1" fill="#f4b084"/><rect x="144" y="464" width="61" height="1" fill="#f4b084"/><rect x="144" y="473" width="61" height="1" fill="#f4b084"/><rect x="144" y="428" width="1" height="46" fill="#f4b084"/><rect x="156" y="428" width="1" height="46" fill="#f4b084"/><rect x="168" y="428" width="1" height="46" fill="#f4b084"/><rect x="180" y="428" width="1" height="46" fill="#f4b084"/><rect x="192" y="428" width="1" height="46" fill="#f4b084"/><rect x="204" y="428" width="1" height="46" fill="#f4b084"/><path d="M147 432.5h58M147 441.5h58M147 450.5h58M147 459.5h58M147 468.5h58" stroke="#000" stroke-width="1" stroke-dasharray="7 5" fill="none"/><rect x="213" y="275" width="61" height="9" fill="#ededed"/><rect x="213" y="293" width="61" height="9" fill="#ededed"/><rect x="213" y="266" width="61" height="10" fill="#a5a5a5"/><rect x="213" y="284" width="61" height="1" fill="#c9c9c9"/><rect x="213" y="293" width="61" height="1" fill="#c9c9c9"/><rect x="213" y="302" width="61" height="1" fill="#c9c9c9"/><rect x="213" y="311" width="61" height="1" fill="#c9c9c9"/><rect x="213" y="266" width="1" height="46" fill="#c9c9c9"/><rect x="273" y="266" width="1" height="46" fill="#c9c9c9"/><path d="M216 270.5h58" stroke="#fff" stroke-width="1" stroke-dasharray="7 5" fill="none"/><path d="M216 279.5h58M216 288.5h58M216 297.5h58M216 306.5h58" stroke="#000" stroke-width="1" stroke-dasharray="7 5" fill="none"/><rect x="213" y="320" width="61" height="9" fill="#a5a5a5"/><rect x="213" y="329" width="61" height="9" fill="#dbdbdb"/><rect x="213" y="347" width="61" height="9" fill="#dbdbdb"/><rect x="213" y="338" width="61" height="9" fill="#ededed"/><rect x="213" y="356" width="61" height="9" fill="#ededed"/><rect x="213" y="365" width="61" height="1" fill="#ededed"/><rect x="213" y="329" width="61" height="1" fill="#fff"/><rect x="213" y="338" width="61" height="1" fill="#fff"/><rect x="213" y="347" width="61" height="1" fill="#fff"/><rect x="213" y="356" width="61" height="1" fill="#fff"/><rect x="225" y="320" width="1" height="46" fill="#fff"/><rect x="237" y="320" width="1" height="46" fill="#fff"/><rect x="249" y="320" width="1" height="46" fill="#fff"/><rect x="261" y="320" width="1" height="46" fill="#fff"/><path d="M216 324.5h58" stroke="#fff" stroke-width="1" stroke-dasharray="7 5" fill="none"/><path d="M216 333.5h58M216 342.5h58M216 351.5h58M216 360.5h58" stroke="#000" stroke-width="1" stroke-dasharray="7 5" fill="none"/><rect x="213" y="374" width="61" height="10" fill="#a5a5a5"/><rect x="213" y="384" width="61" height="9" fill="#d9d9d9"/><rect x="213" y="402" width="61" height="9" fill="#d9d9d9"/><rect x="213" y="374" width="61" height="1" fill="#000"/><rect x="213" y="383" width="61" height="1" fill="#000"/><rect x="213" y="419" width="61" height="1" fill="#000"/><path d="M216 378.5h58" stroke="#fff" stroke-width="1" stroke-dasharray="7 5" fill="none"/><path d="M216 387.5h58M216 396.5h58M216 405.5h58M216 414.5h58" stroke="#000" stroke-width="1" stroke-dasharray="7 5" fill="none"/><rect x="213" y="428" width="61" height="9" fill="#ededed"/><rect x="213" y="446" width="61" height="9" fill="#ededed"/><rect x="213" y="464" width="61" height="9" fill="#ededed"/><rect x="213" y="437" width="61" height="9" fill="#dbdbdb"/><rect x="213" y="455" width="61" height="9" fill="#dbdbdb"/><rect x="213" y="428" width="61" height="1" fill="#c9c9c9"/><rect x="213" y="437" width="61" height="1" fill="#c9c9c9"/><rect x="213" y="446" width="61" height="1" fill="#c9c9c9"/><rect x="213" y="455" width="61" height="1" fill="#c9c9c9"/><rect x="213" y="464" width="61" height="1" fill="#c9c9c9"/><rect x="213" y="473" width="61" height="1" fill="#c9c9c9"/><rect x="213" y="428" width="1" height="46" fill="#c9c9c9"/><rect x="225" y="428" width="1" height="46" fill="#c9c9c9"/><rect x="237" y="428" width="1" height="46" fill="#c9c9c9"/><rect x="249" y="428" width="1" height="46" fill="#c9c9c9"/><rect x="261" y="428" width="1" height="46" fill="#c9c9c9"/><rect x="273" y="428" width="1" height="46" fill="#c9c9c9"/><path d="M216 432.5h58M216 441.5h58M216 450.5h58M216 459.5h58M216 468.5h58" stroke="#000" stroke-width="1" stroke-dasharray="7 5" fill="none"/><rect x="282" y="275" width="61" height="9" fill="#fff2cc"/><rect x="282" y="293" width="61" height="9" fill="#fff2cc"/><rect x="282" y="266" width="61" height="10" fill="#ffc000"/><rect x="282" y="284" width="61" height="1" fill="#ffd966"/><rect x="282" y="293" width="61" height="1" fill="#ffd966"/><rect x="282" y="302" width="61" height="1" fill="#ffd966"/><rect x="282" y="311" width="61" height="1" fill="#ffd966"/><rect x="282" y="266" width="1" height="46" fill="#ffd966"/><rect x="342" y="266" width="1" height="46" fill="#ffd966"/><path d="M285 270.5h58" stroke="#fff" stroke-width="1" stroke-dasharray="7 5" fill="none"/><path d="M285 279.5h58M285 288.5h58M285 297.5h58M285 306.5h58" stroke="#000" stroke-width="1" stroke-dasharray="7 5" fill="none"/><rect x="282" y="320" width="61" height="9" fill="#ffc000"/><rect x="282" y="329" width="61" height="9" fill="#ffe699"/><rect x="282" y="347" width="61" height="9" fill="#ffe699"/><rect x="282" y="338" width="61" height="9" fill="#fff2cc"/><rect x="282" y="356" width="61" height="9" fill="#fff2cc"/><rect x="282" y="365" width="61" height="1" fill="#fff2cc"/><rect x="282" y="329" width="61" height="1" fill="#fff"/><rect x="282" y="338" width="61" height="1" fill="#fff"/><rect x="282" y="347" width="61" height="1" fill="#fff"/><rect x="282" y="356" width="61" height="1" fill="#fff"/><rect x="294" y="320" width="1" height="46" fill="#fff"/><rect x="306" y="320" width="1" height="46" fill="#fff"/><rect x="318" y="320" width="1" height="46" fill="#fff"/><rect x="330" y="320" width="1" height="46" fill="#fff"/><path d="M285 324.5h58" stroke="#fff" stroke-width="1" stroke-dasharray="7 5" fill="none"/><path d="M285 333.5h58M285 342.5h58M285 351.5h58M285 360.5h58" stroke="#000" stroke-width="1" stroke-dasharray="7 5" fill="none"/><rect x="282" y="374" width="61" height="10" fill="#ffc000"/><rect x="282" y="384" width="61" height="9" fill="#d9d9d9"/><rect x="282" y="402" width="61" height="9" fill="#d9d9d9"/><rect x="282" y="374" width="61" height="1" fill="#000"/><rect x="282" y="383" width="61" height="1" fill="#000"/><rect x="282" y="419" width="61" height="1" fill="#000"/><path d="M285 378.5h58" stroke="#fff" stroke-width="1" stroke-dasharray="7 5" fill="none"/><path d="M285 387.5h58M285 396.5h58M285 405.5h58M285 414.5h58" stroke="#000" stroke-width="1" stroke-dasharray="7 5" fill="none"/><rect x="282" y="428" width="61" height="9" fill="#fff2cc"/><rect x="282" y="446" width="61" height="9" fill="#fff2cc"/><rect x="282" y="464" width="61" height="9" fill="#fff2cc"/><rect x="282" y="437" width="61" height="9" fill="#ffe699"/><rect x="282" y="455" width="61" height="9" fill="#ffe699"/><rect x="282" y="428" width="61" height="1" fill="#ffd966"/><rect x="282" y="437" width="61" height="1" fill="#ffd966"/><rect x="282" y="446" width="61" height="1" fill="#ffd966"/><rect x="282" y="455" width="61" height="1" fill="#ffd966"/><rect x="282" y="464" width="61" height="1" fill="#ffd966"/><rect x="282" y="473" width="61" height="1" fill="#ffd966"/><rect x="282" y="428" width="1" height="46" fill="#ffd966"/><rect x="294" y="428" width="1" height="46" fill="#ffd966"/><rect x="306" y="428" width="1" height="46" fill="#ffd966"/><rect x="318" y="428" width="1" height="46" fill="#ffd966"/><rect x="330" y="428" width="1" height="46" fill="#ffd966"/><rect x="342" y="428" width="1" height="46" fill="#ffd966"/><path d="M285 432.5h58M285 441.5h58M285 450.5h58M285 459.5h58M285 468.5h58" stroke="#000" stroke-width="1" stroke-dasharray="7 5" fill="none"/><rect x="351" y="275" width="61" height="9" fill="#ddebf7"/><rect x="351" y="293" width="61" height="9" fill="#ddebf7"/><rect x="351" y="266" width="61" height="10" fill="#5b9bd5"/><rect x="351" y="284" width="61" height="1" fill="#9bc2e6"/><rect x="351" y="293" width="61" height="1" fill="#9bc2e6"/><rect x="351" y="302" width="61" height="1" fill="#9bc2e6"/><rect x="351" y="311" width="61" height="1" fill="#9bc2e6"/><rect x="351" y="266" width="1" height="46" fill="#9bc2e6"/><rect x="411" y="266" width="1" height="46" fill="#9bc2e6"/><path d="M354 270.5h58" stroke="#fff" stroke-width="1" stroke-dasharray="7 5" fill="none"/><path d="M354 279.5h58M354 288.5h58M354 297.5h58M354 306.5h58" stroke="#000" stroke-width="1" stroke-dasharray="7 5" fill="none"/><rect x="351" y="320" width="61" height="9" fill="#5b9bd5"/><rect x="351" y="329" width="61" height="9" fill="#bdd7ee"/><rect x="351" y="347" width="61" height="9" fill="#bdd7ee"/><rect x="351" y="338" width="61" height="9" fill="#ddebf7"/><rect x="351" y="356" width="61" height="9" fill="#ddebf7"/><rect x="351" y="365" width="61" height="1" fill="#ddebf7"/><rect x="351" y="329" width="61" height="1" fill="#fff"/><rect x="351" y="338" width="61" height="1" fill="#fff"/><rect x="351" y="347" width="61" height="1" fill="#fff"/><rect x="351" y="356" width="61" height="1" fill="#fff"/><rect x="363" y="320" width="1" height="46" fill="#fff"/><rect x="375" y="320" width="1" height="46" fill="#fff"/><rect x="387" y="320" width="1" height="46" fill="#fff"/><rect x="399" y="320" width="1" height="46" fill="#fff"/><path d="M354 324.5h58" stroke="#fff" stroke-width="1" stroke-dasharray="7 5" fill="none"/><path d="M354 333.5h58M354 342.5h58M354 351.5h58M354 360.5h58" stroke="#000" stroke-width="1" stroke-dasharray="7 5" fill="none"/><rect x="351" y="374" width="61" height="10" fill="#5b9bd5"/><rect x="351" y="384" width="61" height="9" fill="#d9d9d9"/><rect x="351" y="402" width="61" height="9" fill="#d9d9d9"/><rect x="351" y="374" width="61" height="1" fill="#000"/><rect x="351" y="383" width="61" height="1" fill="#000"/><rect x="351" y="419" width="61" height="1" fill="#000"/><path d="M354 378.5h58" stroke="#fff" stroke-width="1" stroke-dasharray="7 5" fill="none"/><path d="M354 387.5h58M354 396.5h58M354 405.5h58M354 414.5h58" stroke="#000" stroke-width="1" stroke-dasharray="7 5" fill="none"/><rect x="351" y="428" width="61" height="9" fill="#ddebf7"/><rect x="351" y="446" width="61" height="9" fill="#ddebf7"/><rect x="351" y="464" width="61" height="9" fill="#ddebf7"/><rect x="351" y="437" width="61" height="9" fill="#bdd7ee"/><rect x="351" y="455" width="61" height="9" fill="#bdd7ee"/><rect x="351" y="428" width="61" height="1" fill="#9bc2e6"/><rect x="351" y="437" width="61" height="1" fill="#9bc2e6"/><rect x="351" y="446" width="61" height="1" fill="#9bc2e6"/><rect x="351" y="455" width="61" height="1" fill="#9bc2e6"/><rect x="351" y="464" width="61" height="1" fill="#9bc2e6"/><rect x="351" y="473" width="61" height="1" fill="#9bc2e6"/><rect x="351" y="428" width="1" height="46" fill="#9bc2e6"/><rect x="363" y="428" width="1" height="46" fill="#9bc2e6"/><rect x="375" y="428" width="1" height="46" fill="#9bc2e6"/><rect x="387" y="428" width="1" height="46" fill="#9bc2e6"/><rect x="399" y="428" width="1" height="46" fill="#9bc2e6"/><rect x="411" y="428" width="1" height="46" fill="#9bc2e6"/><path d="M354 432.5h58M354 441.5h58M354 450.5h58M354 459.5h58M354 468.5h58" stroke="#000" stroke-width="1" stroke-dasharray="7 5" fill="none"/><rect x="420" y="275" width="61" height="9" fill="#e2efda"/><rect x="420" y="293" width="61" height="9" fill="#e2efda"/><rect x="420" y="266" width="61" height="10" fill="#70ad47"/><rect x="420" y="284" width="61" height="1" fill="#a9d08e"/><rect x="420" y="293" width="61" height="1" fill="#a9d08e"/><rect x="420" y="302" width="61" height="1" fill="#a9d08e"/><rect x="420" y="311" width="61" height="1" fill="#a9d08e"/><rect x="420" y="266" width="1" height="46" fill="#a9d08e"/><rect x="480" y="266" width="1" height="46" fill="#a9d08e"/><path d="M423 270.5h58" stroke="#fff" stroke-width="1" stroke-dasharray="7 5" fill="none"/><path d="M423 279.5h58M423 288.5h58M423 297.5h58M423 306.5h58" stroke="#000" stroke-width="1" stroke-dasharray="7 5" fill="none"/><rect x="420" y="320" width="61" height="9" fill="#70ad47"/><rect x="420" y="329" width="61" height="9" fill="#c6e0b4"/><rect x="420" y="347" width="61" height="9" fill="#c6e0b4"/><rect x="420" y="338" width="61" height="9" fill="#e2efda"/><rect x="420" y="356" width="61" height="9" fill="#e2efda"/><rect x="420" y="365" width="61" height="1" fill="#e2efda"/><rect x="420" y="329" width="61" height="1" fill="#fff"/><rect x="420" y="338" width="61" height="1" fill="#fff"/><rect x="420" y="347" width="61" height="1" fill="#fff"/><rect x="420" y="356" width="61" height="1" fill="#fff"/><rect x="432" y="320" width="1" height="46" fill="#fff"/><rect x="444" y="320" width="1" height="46" fill="#fff"/><rect x="456" y="320" width="1" height="46" fill="#fff"/><rect x="468" y="320" width="1" height="46" fill="#fff"/><path d="M423 324.5h58" stroke="#fff" stroke-width="1" stroke-dasharray="7 5" fill="none"/><path d="M423 333.5h58M423 342.5h58M423 351.5h58M423 360.5h58" stroke="#000" stroke-width="1" stroke-dasharray="7 5" fill="none"/><rect x="420" y="374" width="61" height="10" fill="#70ad47"/><rect x="420" y="384" width="61" height="9" fill="#d9d9d9"/><rect x="420" y="402" width="61" height="9" fill="#d9d9d9"/><rect x="420" y="374" width="61" height="1" fill="#000"/><rect x="420" y="383" width="61" height="1" fill="#000"/><rect x="420" y="419" width="61" height="1" fill="#000"/><path d="M423 378.5h58" stroke="#fff" stroke-width="1" stroke-dasharray="7 5" fill="none"/><path d="M423 387.5h58M423 396.5h58M423 405.5h58M423 414.5h58" stroke="#000" stroke-width="1" stroke-dasharray="7 5" fill="none"/><rect x="420" y="428" width="61" height="9" fill="#e2efda"/><rect x="420" y="446" width="61" height="9" fill="#e2efda"/><rect x="420" y="464" width="61" height="9" fill="#e2efda"/><rect x="420" y="437" width="61" height="9" fill="#c6e0b4"/><rect x="420" y="455" width="61" height="9" fill="#c6e0b4"/><rect x="420" y="428" width="61" height="1" fill="#a9d08e"/><rect x="420" y="437" width="61" height="1" fill="#a9d08e"/><rect x="420" y="446" width="61" height="1" fill="#a9d08e"/><rect x="420" y="455" width="61" height="1" fill="#a9d08e"/><rect x="420" y="464" width="61" height="1" fill="#a9d08e"/><rect x="420" y="473" width="61" height="1" fill="#a9d08e"/><rect x="420" y="428" width="1" height="46" fill="#a9d08e"/><rect x="432" y="428" width="1" height="46" fill="#a9d08e"/><rect x="444" y="428" width="1" height="46" fill="#a9d08e"/><rect x="456" y="428" width="1" height="46" fill="#a9d08e"/><rect x="468" y="428" width="1" height="46" fill="#a9d08e"/><rect x="480" y="428" width="1" height="46" fill="#a9d08e"/><path d="M423 432.5h58M423 441.5h58M423 450.5h58M423 459.5h58M423 468.5h58" stroke="#000" stroke-width="1" stroke-dasharray="7 5" fill="none"/></svg><div style="left:854px;top:544px;width:1334px;height:1px;background:#e1e1e1;"></div><div style="left:886px;top:548px;width:14px;height:20px;overflow:hidden"><span class="t" id="t98" style="left:0px;top:2.8px;font-size:12px;line-height:16px;color:#444;">Создать стиль таблицы...</span></div><span class="t" id="t99" style="left:886.5px;top:574.4px;font-size:12px;line-height:16px;color:#444;transform:scaleX(0.9854);">О<u>ч</u>истить</span><div style="left:1095px;top:596px;width:2px;height:2px;background:#b0b6bd;"></div><div style="left:1100px;top:596px;width:2px;height:2px;background:#b0b6bd;"></div><div style="left:1105px;top:596px;width:2px;height:2px;background:#b0b6bd;"></div><div style="left:1110px;top:596px;width:2px;height:2px;background:#b0b6bd;"></div><div style="left:899px;top:539px;width:246px;height:25px;background:#fff;border:1px solid #bebebe;box-sizing:border-box;box-shadow:1px 1px 3px #0003;"></div><span class="t" id="t100" style="left:905px;top:545.0px;font-size:12px;line-height:16px;color:#575757;transform:scaleX(0.9789);">Светло-серый, Стиль таблицы: средний 22</span><svg style="left:17px;top:5px" width="14" height="14" viewBox="0 0 14 14" ><rect x="0.9" y="0.9" width="12.2" height="12.2" fill="none" stroke="#fff" stroke-width="1.8"/><rect x="1" y="6.9" width="12" height="2.4" fill="#fff"/><rect x="4.5" y="9" width="3.2" height="5" fill="#fff"/></svg><svg style="left:45px;top:3px" width="17" height="17" viewBox="0 0 17 17" ><path d="M7.4 2.2L1.8 6.6l5.6 4M2.2 6.6h7.1a4.4 3.9 0 0 1 0 7.8H8.6" fill="none" stroke="#fff" stroke-width="1.8" stroke-linejoin="miter"/></svg><svg style="left:65px;top:9px" width="7" height="5" viewBox="0 0 7 5" ><path d="M0.6 0.8h5.8l-2.9 3.4z" fill="#fff"/></svg><svg style="left:79px;top:3px" width="17" height="17" viewBox="0 0 17 17" ><path d="M9.6 2.2l5.6 4.4-5.6 4M14.8 6.6H7.7a4.4 3.9 0 0 0 0 7.8h0.7" fill="none" stroke="#5f9c7c" stroke-width="1.8" stroke-linejoin="miter"/></svg><svg style="left:100px;top:9px" width="7" height="5" viewBox="0 0 7 5" ><path d="M0.6 0.8h5.8l-2.9 3.4z" fill="#5f9c7c"/></svg><svg style="left:119px;top:8px" width="8" height="8" viewBox="0 0 8 8" ><rect x="0.8" y="1" width="6" height="1.3" fill="#fff"/><path d="M0.6 3.6h6.4l-3.2 3.6z" fill="#fff"/></svg><svg style="left:1192px;top:4px" width="16" height="12" viewBox="0 0 16 12" ><rect x="1.5" y="1.5" width="12.5" height="9.5" fill="none" stroke="#fff" stroke-width="1.1"/><path d="M1.5 4h12.5" stroke="#fff" stroke-width="1.1"/><path d="M7.75 10V5.6M5.6 7.6l2.15-2.1 2.15 2.1" fill="none" stroke="#fff" stroke-width="1.1"/></svg><div style="left:1241px;top:10px;width:10px;height:1px;background:#fff;"></div><svg style="left:1286px;top:4px" width="12" height="12" viewBox="0 0 12 12" ><rect x="1" y="3.5" width="7.5" height="7.5" fill="none" stroke="#fff" stroke-width="1.1"/><path d="M3.5 3.5V1h7.5v7.5H8.5" fill="none" stroke="#fff" stroke-width="1.1"/></svg><svg style="left:1331.5px;top:4px" width="8" height="12" viewBox="0 0 8 12" ><path d="M2 1l10 10M12 1L2 11" stroke="#fff" stroke-width="1.1"/></svg><svg style="left:1113px;top:37px" width="13" height="15" viewBox="0 0 13 15" ><path d="M4.2 10.2c0-1.6-1.9-2.4-1.9-4.9a4.2 4.2 0 0 1 8.4 0c0 2.5-1.9 3.3-1.9 4.9z" fill="none" stroke="#e3efe8" stroke-width="1.1"/><path d="M4.4 12.2h4.2M4.9 14h3.2" stroke="#e3efe8" stroke-width="1.1"/></svg><svg style="left:1265px;top:35px" width="18" height="18" viewBox="0 0 18 18" ><circle cx="9" cy="5.4" r="3.9" fill="none" stroke="#fff" stroke-width="1.1"/><path d="M1.8 17c0.6-4 3.4-6.6 6.4-7.4" fill="none" stroke="#fff" stroke-width="1.1"/><path d="M13 10v7M9.5 13.5h7" stroke="#fff" stroke-width="1.1"/></svg><svg style="left:1px;top:111px" width="18" height="18" viewBox="0 0 18 18" ><rect x="4.5" y="4.5" width="9" height="9" fill="#fff" stroke="#7a7a7a" stroke-width="1"/><rect x="4" y="4" width="10" height="2.4" fill="#7a7a7a"/><path d="M7.5 6v7.5M10.5 6v7.5M4.5 8.8h9M4.5 11.2h9" stroke="#9a9a9a" stroke-width="0.8"/><path d="M9 0.3l2.2 2.3H6.8zM9 17.7l2.2-2.3H6.8zM0.3 9l2.3-2.2v4.4zM17.7 9l-2.3-2.2v4.4z" fill="#3e74b8"/></svg><svg style="left:131px;top:66px" width="16" height="16" viewBox="0 0 16 16" ><rect x="0.5" y="0.5" width="15" height="15" fill="#fff" stroke="#7a7a7a"/><rect x="2.4" y="2.4" width="2.6" height="2.6" fill="#b4b4b4"/><rect x="6" y="2.4" width="7.6" height="2.6" fill="#b4b4b4"/><rect x="2.4" y="6" width="2.6" height="7.6" fill="#b4b4b4"/><path d="M7.4 11.4h3a1.8 1.8 0 0 0 1.8-1.8V7.6" fill="none" stroke="#3e74b8" stroke-width="1.6"/><path d="M9.6 8.4l2.6-3.2 2.6 3.2zM8.6 8.8L5.4 11.4l3.2 2.6z" fill="#3e74b8"/></svg><svg style="left:131px;top:90px" width="16" height="14" viewBox="0 0 16 14" ><rect x="0.5" y="0.5" width="4.6" height="13" fill="#fff" stroke="#7a7a7a"/><rect x="11" y="0.5" width="4.6" height="13" fill="#fff" stroke="#7a7a7a"/><rect x="1" y="1" width="3.6" height="3" fill="#3e74b8"/><rect x="1" y="4.4" width="3.6" height="2.8" fill="#e8b659"/><rect x="1" y="7.6" width="3.6" height="2.4" fill="#3e74b8"/><rect x="1" y="10.2" width="3.6" height="2.8" fill="#e8b659"/><rect x="11.5" y="1" width="3.6" height="3" fill="#3e74b8"/><rect x="11.5" y="4.4" width="3.6" height="2.8" fill="#e8b659"/><path d="M11 7.4h4.6M11 10.4h4.6" stroke="#7a7a7a" stroke-width="0.9"/><path d="M6 7h2.4" stroke="#3e74b8" stroke-width="1.1"/><path d="M8 5.2L10 7 8 8.8z" fill="#3e74b8"/></svg><svg style="left:131px;top:112px" width="17" height="17" viewBox="0 0 17 17" ><rect x="0.5" y="0.5" width="10.5" height="5.6" fill="#dbe5f3" stroke="#8a8a8a"/><path d="M6.2 0.5v5.6" stroke="#8a8a8a"/><rect x="2" y="2.8" width="2.4" height="1.1" fill="#666"/><path d="M7.3 2.4h2.6l-1.3 1.7z" fill="#555"/><rect x="5" y="9.3" width="11" height="5.4" fill="#dbe5f3" stroke="#8a8a8a"/><rect x="7.4" y="11.5" width="6.2" height="1.1" fill="#777"/><path d="M1.2 7.6c0 3.4 1 4.6 3.6 5" fill="none" stroke="#3e74b8" stroke-width="1.4"/><path d="M3 10.6l2.6 2.2-2.6 2.6" fill="none" stroke="#3e74b8" stroke-width="1.4"/></svg><svg style="left:315px;top:67px" width="30" height="30" viewBox="0 0 30 30" ><rect x="1.5" y="1.5" width="27" height="26.5" fill="#fff" stroke="#8a8a8a"/><rect x="1" y="1" width="28" height="3.6" fill="#7a7a7a"/><rect x="4" y="7.2" width="22" height="3.2" rx="0.8" fill="#3e74b8"/><rect x="4" y="14" width="8" height="3.2" rx="0.8" fill="#3e74b8"/><rect x="4" y="20.6" width="22" height="3.2" fill="#bcd3ec"/><path d="M9.6 12h17l-6.4 7.6v6.4h-3.6v-6.4z" fill="#7c7c7c" stroke="#fff" stroke-width="0.9"/></svg><svg style="left:376px;top:67px" width="32" height="32" viewBox="0 0 32 32" ><rect x="1.5" y="1.5" width="27" height="23.5" fill="#fff" stroke="#8a8a8a"/><rect x="1" y="1" width="28" height="4.4" fill="#7a7a7a"/><path d="M10.3 5v20M19.6 5v20M1.5 11.6h27M1.5 18.2h27" stroke="#9a9a9a" stroke-width="1"/><path d="M14.6 17.6c1 5.6 5 7.4 12 7" fill="none" stroke="#f1f1f1" stroke-width="6.4"/><path d="M22.6 17l7.6 7.8-7.6 7.4" fill="none" stroke="#f1f1f1" stroke-width="6.4"/><rect x="18" y="25.6" width="14" height="6.4" fill="#f1f1f1"/><path d="M14.6 17.8c1 5.4 5 7.2 12.4 6.8" fill="none" stroke="#3e74b8" stroke-width="3.2"/><path d="M23 18.2l6.6 6.4-6.6 6.4" fill="none" stroke="#3e74b8" stroke-width="3.2"/></svg><svg style="left:432px;top:66px" width="31" height="33" viewBox="0 0 31 33" ><path d="M2 1.5h13l7 7V27H2z" fill="#f6f3f7" stroke="#c9c9c9"/><path d="M15 1.5v7h7" fill="none" stroke="#c9c9c9"/><circle cx="22" cy="24" r="8.2" fill="#f1f1f1"/><path d="M16.4 23a5.8 5.8 0 0 1 10-3.4M27.6 25a5.8 5.8 0 0 1-10 3.4" fill="none" stroke="#b9b9b9" stroke-width="2.2"/><path d="M24.4 20.6h4.4v-4.4zM19.6 27.4h-4.4v4.4z" fill="#b9b9b9"/></svg><svg style="left:387px;top:122px" width="7" height="5" viewBox="0 0 7 5" ><path d="M0.5 0.8h6l-3 3.4z" fill="#555"/></svg><svg style="left:442px;top:122px" width="7" height="5" viewBox="0 0 7 5" ><path d="M0.5 0.8h6l-3 3.4z" fill="#555"/></svg><svg style="left:479px;top:66px" width="15" height="16" viewBox="0 0 15 16" ><rect x="0.5" y="0.5" width="13.5" height="14.6" fill="#f6f1f7" stroke="#bdbdbd"/><rect x="0" y="0" width="14.5" height="2.6" fill="#bdbdbd"/><circle cx="4.2" cy="6.4" r="1.2" fill="#bdbdbd"/><circle cx="4.2" cy="11" r="1.1" fill="none" stroke="#bdbdbd" stroke-width="0.8"/><path d="M7 6.4h4.6M7 11h4.6" stroke="#bdbdbd" stroke-width="1.2"/></svg><svg style="left:479px;top:89px" width="17" height="17" viewBox="0 0 17 17" ><rect x="0.5" y="0.5" width="12.5" height="11" fill="#f6f1f7" stroke="#bdbdbd"/><rect x="0" y="0" width="13.5" height="2.6" fill="#bdbdbd"/><path d="M4.6 2v9.5M8.8 2v5" stroke="#bdbdbd"/><circle cx="11" cy="11" r="4.8" fill="#f1f1f1"/><circle cx="11" cy="11" r="4" fill="none" stroke="#bdbdbd" stroke-width="1.1"/><path d="M7 11h8M11 7v8M8 9h6M8 13h6" stroke="#bdbdbd" stroke-width="0.8"/></svg><svg style="left:477px;top:111px" width="17" height="17" viewBox="0 0 17 17" ><path d="M7 6H4.4a2.6 2.6 0 0 0 0 5.2H7M10 6h2.6a2.6 2.6 0 0 1 0 5.2H10" fill="none" stroke="#bdbdbd" stroke-width="1.8"/><path d="M8.5 0.6v3.2M5 1.4l1.4 2.6M12 1.4l-1.4 2.6M8.5 16.4v-3.2M5 15.6l1.4-2.6M12 15.6l-1.4-2.6" stroke="#bdbdbd" stroke-width="0.9"/></svg><svg style="left:625px;top:67px" width="13" height="13" viewBox="0 0 13 13" ><path d="M2.6 6.8l2.9 3 5.2-7" fill="none" stroke="#5e5e5e" stroke-width="1.6"/></svg><svg style="left:625px;top:113px" width="13" height="13" viewBox="0 0 13 13" ><path d="M2.6 6.8l2.9 3 5.2-7" fill="none" stroke="#5e5e5e" stroke-width="1.6"/></svg><svg style="left:88px;top:173px" width="8" height="5" viewBox="0 0 8 5" ><path d="M0.4 0.4h7.2l-3.6 3.9z" fill="#777"/></svg><div style="left:116px;top:171.5px;width:1.5px;height:1.5px;background:#a0a0a0;"></div><div style="left:116px;top:175.5px;width:1.5px;height:1.5px;background:#a0a0a0;"></div><div style="left:116px;top:179.5px;width:1.5px;height:1.5px;background:#a0a0a0;"></div><svg style="left:145px;top:171px" width="12" height="11" viewBox="0 0 12 11" ><path d="M1 0.8l9.6 9.4M10.6 0.8L1 10.2" stroke="#b4b4b4" stroke-width="1.9"/></svg><svg style="left:180px;top:171px" width="15" height="11" viewBox="0 0 15 11" ><path d="M1.2 6l3.8 3.8L13 1" fill="none" stroke="#b4b4b4" stroke-width="2.1"/></svg><span class="t" id="t101" style="left:218px;top:167.6px;font-size:14px;line-height:18px;color:#555;font-weight:bold;font-style:italic;transform:scaleX(1.1993);font-family:&quot;Liberation Serif&quot;,serif;">f<span style="font-size:9px;position:relative;top:1px">x</span></span><svg style="left:1080px;top:705px" width="15" height="14" viewBox="0 0 15 14" ><rect x="1.5" y="1" width="12" height="11.5" fill="none" stroke="#666" stroke-width="1.2"/><path d="M1.5 4.8h12M1.5 8.7h12M5.5 1v11.5M9.5 1v11.5" stroke="#666" stroke-width="1.2"/></svg><svg style="left:1118px;top:705px" width="16" height="14" viewBox="0 0 16 14" ><rect x="1.5" y="1" width="13" height="11.5" fill="none" stroke="#666" stroke-width="1.1"/><rect x="4.5" y="3.6" width="7" height="6.6" fill="#fff" stroke="#666" stroke-width="0.9"/><path d="M6 5.6h4M6 7h4M6 8.4h4" stroke="#666" stroke-width="0.7"/></svg><svg style="left:1156px;top:705px" width="16" height="14" viewBox="0 0 16 14" ><rect x="1.5" y="1" width="13" height="11.5" fill="none" stroke="#666" stroke-width="1.1"/><path d="M5 1v6.6M9 1v6.6H1.5" fill="none" stroke="#666" stroke-width="1.1"/></svg><div style="left:1188px;top:711px;width:6px;height:2px;background:#555;"></div><div style="left:1198px;top:711.5px;width:99px;height:1px;background:#9a9a9a;"></div><div style="left:1246px;top:706px;width:4px;height:11px;background:#666;"></div><div style="left:1302px;top:711px;width:8px;height:2px;background:#555;"></div><div style="left:1305px;top:708px;width:2px;height:8px;background:#555;"></div><svg style="left:859px;top:550px" width="17" height="16" viewBox="0 0 17 16" ><rect x="2.5" y="2.5" width="12.4" height="12" fill="#fff" stroke="#7d7d7d"/><rect x="6" y="5.6" width="8.4" height="8.4" fill="#c7dcf2"/><path d="M2.5 5.6h12.4M2.5 8.6h12.4M2.5 11.6h12.4M5.7 2.5v12M8.8 2.5v12M11.8 2.5v12" stroke="#7d7d7d" stroke-width="0.9"/><circle cx="2.6" cy="2.8" r="2.6" fill="#fff"/><path d="M2.6 0v5.6M-0.2 2.8h5.6M0.7 0.9l3.8 3.8M4.5 0.9L0.7 4.7" stroke="#e79a2d" stroke-width="0.9"/></svg><svg style="left:859px;top:574px" width="17" height="17" viewBox="0 0 17 17" ><rect x="1.5" y="1.7" width="12.4" height="12" fill="#fff" stroke="#7d7d7d"/><rect x="5" y="4.8" width="8.4" height="8.4" fill="#c7dcf2"/><path d="M1.5 4.8h12.4M1.5 7.8h12.4M1.5 10.8h12.4M4.7 1.7v12M7.8 1.7v12M10.8 1.7v12" stroke="#7d7d7d" stroke-width="0.9"/><path d="M4.4 12.2l9.8-6.6 3 3.8-9.6 7z" fill="#fff"/><path d="M5.6 12.4l8.4-5.7 2.3 3-8.3 6z" fill="#e8788e"/><path d="M5.6 12.4l1.5-1 2.4 3.3-1.5 1z" fill="#f3b3c0"/></svg><svg style="left:0px;top:0px" width="1334" height="725" viewBox="0 0 1334 725" shape-rendering="crispEdges"><g fill="none" stroke="#eb1c24" stroke-linejoin="miter" stroke-miterlimit="10"><path d="M801.5 38H882.8V24.4L964.8 53.5L882.8 82.4V67.2H801.5Z" stroke-width="4.5" stroke-linejoin="round"/><rect x="979.5" y="29.5" width="122" height="37.8" stroke-width="4.9"/><rect x="854.55" y="486.6" width="73.9" height="61.8" stroke-width="4.9"/></g></svg>
</div></body></html>
